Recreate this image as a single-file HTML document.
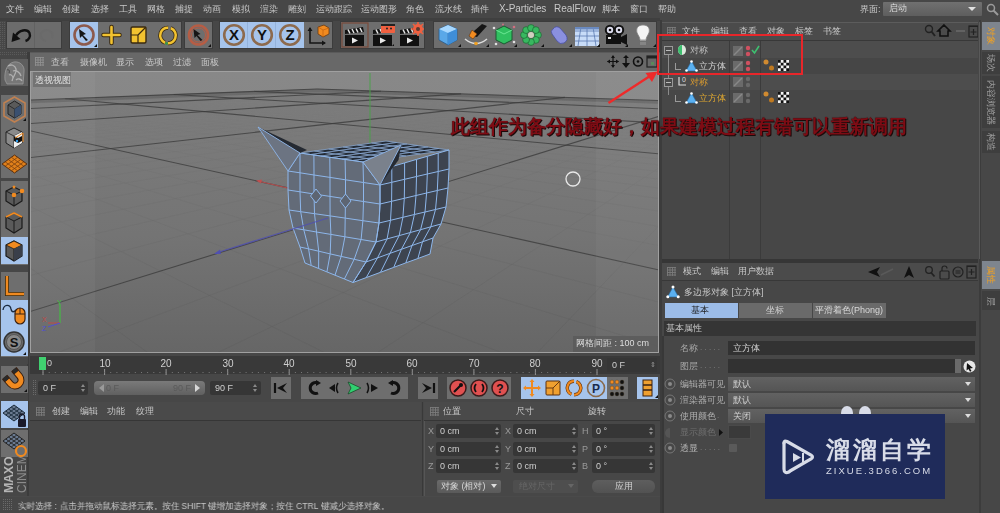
<!DOCTYPE html>
<html><head><meta charset="utf-8">
<style>
*{margin:0;padding:0;box-sizing:border-box}
html,body{width:1000px;height:513px;overflow:hidden;background:#474747;font-family:"Liberation Sans",sans-serif;color:#c4c4c4}
.a{position:absolute;display:block}
.t{position:absolute;white-space:nowrap;will-change:transform}
</style></head><body>
<div class="a" style="left:0px;top:0px;width:1000px;height:20px;background:#474747;"></div>
<div class="t" style="left:6px;top:4px;font-size:9px;line-height:11px;color:#c8c8c8;">文件</div>
<div class="t" style="left:34px;top:4px;font-size:9px;line-height:11px;color:#c8c8c8;">编辑</div>
<div class="t" style="left:62px;top:4px;font-size:9px;line-height:11px;color:#c8c8c8;">创建</div>
<div class="t" style="left:91px;top:4px;font-size:9px;line-height:11px;color:#c8c8c8;">选择</div>
<div class="t" style="left:119px;top:4px;font-size:9px;line-height:11px;color:#c8c8c8;">工具</div>
<div class="t" style="left:147px;top:4px;font-size:9px;line-height:11px;color:#c8c8c8;">网格</div>
<div class="t" style="left:175px;top:4px;font-size:9px;line-height:11px;color:#c8c8c8;">捕捉</div>
<div class="t" style="left:203px;top:4px;font-size:9px;line-height:11px;color:#c8c8c8;">动画</div>
<div class="t" style="left:232px;top:4px;font-size:9px;line-height:11px;color:#c8c8c8;">模拟</div>
<div class="t" style="left:260px;top:4px;font-size:9px;line-height:11px;color:#c8c8c8;">渲染</div>
<div class="t" style="left:288px;top:4px;font-size:9px;line-height:11px;color:#c8c8c8;">雕刻</div>
<div class="t" style="left:316px;top:4px;font-size:9px;line-height:11px;color:#c8c8c8;">运动跟踪</div>
<div class="t" style="left:361px;top:4px;font-size:9px;line-height:11px;color:#c8c8c8;">运动图形</div>
<div class="t" style="left:406px;top:4px;font-size:9px;line-height:11px;color:#c8c8c8;">角色</div>
<div class="t" style="left:435px;top:4px;font-size:9px;line-height:11px;color:#c8c8c8;">流水线</div>
<div class="t" style="left:471px;top:4px;font-size:9px;line-height:11px;color:#c8c8c8;">插件</div>
<div class="t" style="left:499px;top:3px;font-size:10px;line-height:12px;color:#c8c8c8;letter-spacing:-0.1px">X-Particles</div>
<div class="t" style="left:554px;top:3px;font-size:10px;line-height:12px;color:#c8c8c8;">RealFlow</div>
<div class="t" style="left:602px;top:4px;font-size:9px;line-height:11px;color:#c8c8c8;">脚本</div>
<div class="t" style="left:630px;top:4px;font-size:9px;line-height:11px;color:#c8c8c8;">窗口</div>
<div class="t" style="left:658px;top:4px;font-size:9px;line-height:11px;color:#c8c8c8;">帮助</div>
<div class="t" style="left:860px;top:4px;font-size:9px;line-height:11px;color:#c8c8c8;">界面:</div>
<div class="a" style="left:883px;top:2px;width:99px;height:14px;background:linear-gradient(#707070,#5e5e5e);border-radius:1px"></div>
<div class="t" style="left:889px;top:3px;font-size:9px;line-height:11px;color:#dcdcdc;">启动</div>
<svg class="a" style="left:968px;top:7px;" width="9" height="5" viewBox="0 0 9 5"><path d="M0 0H8L4 4Z" fill="#e0e0e0"/></svg>
<svg class="a" style="left:986px;top:3px;" width="14" height="14" viewBox="0 0 14 14"><circle cx="5" cy="5" r="3.5" fill="none" stroke="#9a9a9a" stroke-width="1.5"/><path d="M7.5 7.5L12 12" stroke="#9a9a9a" stroke-width="2"/></svg>
<div class="a" style="left:0px;top:20px;width:660px;height:32px;background:#474747;"></div>
<div class="a" style="left:0px;top:18px;width:660px;height:3px;background:#3f3f3f;"></div>
<svg class="a" style="left:0px;top:22px" width="5" height="28"><g fill="#5a5a5a"><rect x="0" y="0" width="1" height="1"/><rect x="0" y="2" width="1" height="1"/><rect x="0" y="4" width="1" height="1"/><rect x="0" y="6" width="1" height="1"/><rect x="0" y="8" width="1" height="1"/><rect x="0" y="10" width="1" height="1"/><rect x="0" y="12" width="1" height="1"/><rect x="0" y="14" width="1" height="1"/><rect x="0" y="16" width="1" height="1"/><rect x="0" y="18" width="1" height="1"/><rect x="0" y="20" width="1" height="1"/><rect x="0" y="22" width="1" height="1"/><rect x="0" y="24" width="1" height="1"/><rect x="0" y="26" width="1" height="1"/><rect x="2" y="0" width="1" height="1"/><rect x="2" y="2" width="1" height="1"/><rect x="2" y="4" width="1" height="1"/><rect x="2" y="6" width="1" height="1"/><rect x="2" y="8" width="1" height="1"/><rect x="2" y="10" width="1" height="1"/><rect x="2" y="12" width="1" height="1"/><rect x="2" y="14" width="1" height="1"/><rect x="2" y="16" width="1" height="1"/><rect x="2" y="18" width="1" height="1"/><rect x="2" y="20" width="1" height="1"/><rect x="2" y="22" width="1" height="1"/><rect x="2" y="24" width="1" height="1"/><rect x="2" y="26" width="1" height="1"/><rect x="4" y="0" width="1" height="1"/><rect x="4" y="2" width="1" height="1"/><rect x="4" y="4" width="1" height="1"/><rect x="4" y="6" width="1" height="1"/><rect x="4" y="8" width="1" height="1"/><rect x="4" y="10" width="1" height="1"/><rect x="4" y="12" width="1" height="1"/><rect x="4" y="14" width="1" height="1"/><rect x="4" y="16" width="1" height="1"/><rect x="4" y="18" width="1" height="1"/><rect x="4" y="20" width="1" height="1"/><rect x="4" y="22" width="1" height="1"/><rect x="4" y="24" width="1" height="1"/><rect x="4" y="26" width="1" height="1"/></g></svg>
<div class="a" style="left:6px;top:21px;width:56px;height:28px;background:#3c3c3c;"></div>
<div class="a" style="left:7px;top:22px;width:54px;height:26px;background:#6c6c6c;"></div>
<div class="a" style="left:34px;top:22px;width:1px;height:26px;background:#626262;"></div>
<svg class="a" style="left:7px;top:22px;" width="27" height="26" viewBox="0 0 27 26"><path d="M9 13.5C12 8 20 6.5 22.5 11C24 15 21.5 18 18.5 19" fill="none" stroke="#111" stroke-width="2.4"/><path d="M4.5 20L6 10.5L13.5 17Z" fill="#111"/></svg>
<svg class="a" style="left:34px;top:22px;" width="27" height="26" viewBox="0 0 27 26"><path d="M18 16 A6 5.5 0 1 0 12 19" fill="none" stroke="#6a6a6a" stroke-width="2"/></svg>
<div class="a" style="left:69px;top:21px;width:113px;height:28px;background:#3c3c3c;"></div>
<div class="a" style="left:70px;top:22px;width:111px;height:26px;background:#6e6e6e;"></div>
<div class="a" style="left:70px;top:22px;width:28px;height:26px;background:#a6c4ec;"></div>
<svg class="a" style="left:70px;top:22px;" width="28" height="26" viewBox="0 0 28 26"><circle cx="14" cy="13" r="9.5" fill="none" stroke="#8d5a4d" stroke-width="2.6"/><path d="M9 7 L16 12 L13 13 L18 18 L16 19 L12 14 L10 16Z" fill="#151515"/><path d="M24 25H27V22Z" fill="#111"/></svg>
<svg class="a" style="left:98px;top:22px;" width="27" height="26" viewBox="0 0 27 26"><path d="M13.5 5V21M5.5 13H21.5" stroke="#3a2a10" stroke-width="4.5" stroke-linecap="round"/><path d="M13.5 5V21M5.5 13H21.5" stroke="#f2c230" stroke-width="2.6" stroke-linecap="round"/></svg>
<svg class="a" style="left:125px;top:22px;" width="27" height="26" viewBox="0 0 27 26"><rect x="6" y="5" width="15" height="16" rx="1.5" fill="#f2c230" stroke="#3a2a10" stroke-width="1.4"/><path d="M13 21V13H6M13 13L21 5" stroke="#3a2a10" stroke-width="1.2" fill="none"/></svg>
<svg class="a" style="left:152px;top:22px;" width="28" height="26" viewBox="0 0 28 26"><g transform="rotate(-69 16 13.5)"><circle cx="16" cy="13.5" r="7.8" fill="none" stroke="#3a2a10" stroke-width="4" stroke-dasharray="21.5 3"/><circle cx="16" cy="13.5" r="7.8" fill="none" stroke="#f2c230" stroke-width="2.5" stroke-dasharray="21.5 3"/></g><circle cx="14.5" cy="21.5" r="1.4" fill="#3a9a40"/></svg>
<div class="a" style="left:184px;top:21px;width:29px;height:28px;background:#3c3c3c;"></div>
<div class="a" style="left:185px;top:22px;width:27px;height:26px;background:#6e6e6e;"></div>
<svg class="a" style="left:185px;top:22px;" width="27" height="26" viewBox="0 0 27 26"><circle cx="13.5" cy="13" r="9.5" fill="none" stroke="#b55d45" stroke-width="2.6"/><circle cx="13.5" cy="13" r="7" fill="none" stroke="#b55d45" stroke-width="1"/><path d="M8.5 7 L15.5 12 L12.5 13 L17.5 18 L15.5 19 L11.5 14 L9.5 16Z" fill="#151515"/><path d="M23 25H26V22Z" fill="#111"/></svg>
<div class="a" style="left:219px;top:21px;width:114px;height:28px;background:#3c3c3c;"></div>
<div class="a" style="left:220px;top:22px;width:84px;height:26px;background:#a6c4ec;"></div>
<svg class="a" style="left:220px;top:22px;" width="28" height="26" viewBox="0 0 28 26"><circle cx="14" cy="13" r="9.8" fill="none" stroke="#8d6a4d" stroke-width="2.6"/><text x="14" y="18" font-family="Liberation Sans" font-weight="bold" font-size="15" text-anchor="middle" fill="#111">X</text></svg>
<svg class="a" style="left:248px;top:22px;" width="28" height="26" viewBox="0 0 28 26"><circle cx="14" cy="13" r="9.8" fill="none" stroke="#8d6a4d" stroke-width="2.6"/><text x="14" y="18" font-family="Liberation Sans" font-weight="bold" font-size="15" text-anchor="middle" fill="#111">Y</text></svg>
<svg class="a" style="left:276px;top:22px;" width="28" height="26" viewBox="0 0 28 26"><circle cx="14" cy="13" r="9.8" fill="none" stroke="#8d6a4d" stroke-width="2.6"/><text x="14" y="18" font-family="Liberation Sans" font-weight="bold" font-size="15" text-anchor="middle" fill="#111">Z</text></svg>
<div class="a" style="left:247px;top:22px;width:1px;height:26px;background:#94b2da;"></div>
<div class="a" style="left:275px;top:22px;width:1px;height:26px;background:#94b2da;"></div>
<div class="a" style="left:304px;top:22px;width:28px;height:26px;background:#6e6e6e;"></div>
<svg class="a" style="left:304px;top:22px;" width="28" height="26" viewBox="0 0 28 26"><path d="M6 6V21H21" fill="none" stroke="#151515" stroke-width="1.6"/><path d="M3.5 9L6 5L8.5 9Z M18 18.5L22 21L18 23.5Z" fill="#151515"/><path d="M14 5L20 3L25 6V12L19 15L14 12Z" fill="#f08a20" stroke="#6a3a10" stroke-width="0.8"/><path d="M14 5L19 8L25 6M19 8V15" fill="none" stroke="#c06010" stroke-width="0.7"/></svg>
<div class="a" style="left:340px;top:21px;width:85px;height:28px;background:#3c3c3c;"></div>
<div class="a" style="left:341px;top:22px;width:83px;height:26px;background:#6e6e6e;"></div>
<svg class="a" style="left:341px;top:22px;" width="83" height="26" viewBox="0 0 83 26"><rect x="1" y="1" width="26" height="24" fill="none" stroke="#7a4a3a" stroke-width="1.2"/><rect x="4" y="13" width="19" height="11" fill="#111"/><path d="M4 8 L22 5 L23 10 L4 12Z" fill="#111"/><path d="M7 7.5l2 4M11 7l2 4M15 6.5l2 4M19 6l2 4" stroke="#e8e8e8" stroke-width="1.5"/><path d="M11 15.5L17 18.5L11 21.5Z" fill="#e8e8e8"/><rect x="32" y="13" width="19" height="11" fill="#111"/><path d="M32 8 L50 5 L51 10 L32 12Z" fill="#111"/><path d="M35 7.5l2 4M39 7l2 4M43 6.5l2 4M47 6l2 4" stroke="#e8e8e8" stroke-width="1.5"/><path d="M39 15.5L45 18.5L39 21.5Z" fill="#e8e8e8"/><rect x="40" y="2" width="14" height="9" rx="1" fill="#f06040"/><rect x="40" y="2" width="14" height="2" fill="#222"/><circle cx="46" cy="6.5" r="1" fill="#222"/><circle cx="50" cy="6.5" r="1" fill="#222"/><rect x="59" y="13" width="19" height="11" fill="#111"/><path d="M59 8 L77 5 L78 10 L59 12Z" fill="#111"/><path d="M62 7.5l2 4M66 7l2 4M70 6.5l2 4M74 6l2 4" stroke="#e8e8e8" stroke-width="1.5"/><path d="M66 15.5L72 18.5L66 21.5Z" fill="#e8e8e8"/><circle cx="77" cy="7" r="5" fill="#f06040"/><circle cx="77" cy="7" r="2" fill="#5a3a30"/><path d="M77 0v3M77 11v3M70 7h3M81 7h3M72 2l2 2M80 10l2 2M72 12l2-2M80 4l2-2" stroke="#f06040" stroke-width="1.6"/><path d="M51 24h2v-2Z" fill="#111"/></svg>
<div class="a" style="left:433px;top:21px;width:224px;height:28px;background:#3c3c3c;"></div>
<div class="a" style="left:434px;top:22px;width:222px;height:26px;background:#6e6e6e;"></div>
<svg class="a" style="left:434.0px;top:22px;" width="28" height="26" viewBox="0 0 28 26"><path d="M14 3L23 7V18L14 23L5 18V7Z" fill="#5aa8e8" stroke="#2a5a8a" stroke-width="0.8"/><path d="M5 7L14 11L23 7L14 3Z" fill="#a8d8ff"/><path d="M14 11V23" stroke="#3a78b8" stroke-width="0.8"/><path d="M14 11L23 7V18L14 23Z" fill="#3f8ed8"/></svg>
<svg class="a" style="left:461.8px;top:22px;" width="28" height="26" viewBox="0 0 28 26"><path d="M3 17Q14 26 25 17" fill="none" stroke="#dcdcdc" stroke-width="1.6"/><circle cx="14" cy="21.5" r="1.8" fill="#f0a020"/><path d="M20 2L25 4L15 15L10 14L12 9Z" fill="#151515"/><path d="M10 8L15 12L11 17L7 14Z" fill="#f08a20" stroke="#5a3010" stroke-width="0.6"/></svg>
<svg class="a" style="left:489.6px;top:22px;" width="28" height="26" viewBox="0 0 28 26"><path d="M14 4L22 8V18L14 22L6 18V8Z" fill="#30c060" stroke="#1a5a30" stroke-width="1"/><path d="M6 8L14 12L22 8" fill="none" stroke="#7af0a0" stroke-width="0.8"/><circle cx="4" cy="6" r="1.3" fill="#e0e0e0"/><circle cx="24" cy="5" r="1.3" fill="#d07080"/><circle cx="6" cy="22" r="1.3" fill="#e0e0e0"/><circle cx="24" cy="20" r="1.3" fill="#e0e0e0"/><circle cx="13" cy="2.5" r="1" fill="#d07080"/></svg>
<svg class="a" style="left:517.4px;top:22px;" width="28" height="26" viewBox="0 0 28 26"><circle cx="21.0" cy="13.0" r="3.4" fill="#38b860" stroke="#1a5a2a" stroke-width="0.6"/><circle cx="18.9" cy="17.9" r="3.4" fill="#38b860" stroke="#1a5a2a" stroke-width="0.6"/><circle cx="14.0" cy="20.0" r="3.4" fill="#38b860" stroke="#1a5a2a" stroke-width="0.6"/><circle cx="9.1" cy="17.9" r="3.4" fill="#38b860" stroke="#1a5a2a" stroke-width="0.6"/><circle cx="7.0" cy="13.0" r="3.4" fill="#38b860" stroke="#1a5a2a" stroke-width="0.6"/><circle cx="9.1" cy="8.1" r="3.4" fill="#38b860" stroke="#1a5a2a" stroke-width="0.6"/><circle cx="14.0" cy="6.0" r="3.4" fill="#38b860" stroke="#1a5a2a" stroke-width="0.6"/><circle cx="18.9" cy="8.1" r="3.4" fill="#38b860" stroke="#1a5a2a" stroke-width="0.6"/><circle cx="14" cy="13" r="3" fill="#d0d0c0"/></svg>
<svg class="a" style="left:545.2px;top:22px;" width="28" height="26" viewBox="0 0 28 26"><path d="M8 7Q11 3 15 6L21 13Q24 18 19 21Q15 23 12 19L7 12Q5 9 8 7Z" fill="#8a90e0" stroke="#4a50a0" stroke-width="0.8"/></svg>
<svg class="a" style="left:573.0px;top:22px;" width="28" height="26" viewBox="0 0 28 26"><rect x="2" y="5" width="24" height="19" fill="#c8dcf8"/><path d="M2 9H26M2 14H26M2 19H26M8 5L5 24M14 5V24M20 5L23 24" stroke="#5a7ab0" stroke-width="0.8"/><rect x="2" y="5" width="24" height="2.5" fill="#6a8ac0"/><path d="M24 25h3v-3Z" fill="#111"/></svg>
<svg class="a" style="left:600.8px;top:22px;" width="28" height="26" viewBox="0 0 28 26"><circle cx="9" cy="8" r="4.2" fill="#dde" stroke="#111" stroke-width="2"/><circle cx="18" cy="8" r="4.2" fill="#dde" stroke="#111" stroke-width="2"/><circle cx="9" cy="8" r="1.3" fill="#111"/><circle cx="18" cy="8" r="1.3" fill="#111"/><rect x="5" y="13" width="15" height="9" fill="#111"/><path d="M20 15L26 12V23L20 20Z" fill="#111"/><rect x="7" y="15" width="3" height="2" fill="#e8e8e8"/></svg>
<svg class="a" style="left:628.6px;top:22px;" width="28" height="26" viewBox="0 0 28 26"><path d="M14 3C8.5 3 7 7 8 10.5C9 13.5 11 15 11 18H17C17 15 19 13.5 20 10.5C21 7 19.5 3 14 3Z" fill="#f4f4f4" stroke="#888" stroke-width="0.8"/><rect x="11" y="18" width="6" height="4.5" fill="#9a9a9a"/><path d="M11 19.5h6M11 21h6" stroke="#555" stroke-width="0.6"/></svg>
<svg class="a" style="left:457.0px;top:43px;" width="5" height="5" viewBox="0 0 5 5"><path d="M1 4H4V1Z" fill="#111"/></svg>
<svg class="a" style="left:484.8px;top:43px;" width="5" height="5" viewBox="0 0 5 5"><path d="M1 4H4V1Z" fill="#111"/></svg>
<svg class="a" style="left:512.6px;top:43px;" width="5" height="5" viewBox="0 0 5 5"><path d="M1 4H4V1Z" fill="#111"/></svg>
<svg class="a" style="left:540.4px;top:43px;" width="5" height="5" viewBox="0 0 5 5"><path d="M1 4H4V1Z" fill="#111"/></svg>
<svg class="a" style="left:568.2px;top:43px;" width="5" height="5" viewBox="0 0 5 5"><path d="M1 4H4V1Z" fill="#111"/></svg>
<svg class="a" style="left:596.0px;top:43px;" width="5" height="5" viewBox="0 0 5 5"><path d="M1 4H4V1Z" fill="#111"/></svg>
<svg class="a" style="left:623.8px;top:43px;" width="5" height="5" viewBox="0 0 5 5"><path d="M1 4H4V1Z" fill="#111"/></svg>
<svg class="a" style="left:651.6px;top:43px;" width="5" height="5" viewBox="0 0 5 5"><path d="M1 4H4V1Z" fill="#111"/></svg>
<div class="a" style="left:0px;top:52px;width:29px;height:442px;background:#474747;"></div>
<div class="a" style="left:27px;top:52px;width:3px;height:444px;background:#3c3c3c;"></div>
<svg class="a" style="left:0px;top:52px" width="28" height="4"><g fill="#5a5a5a"><rect x="0" y="0" width="1" height="1"/><rect x="0" y="2" width="1" height="1"/><rect x="2" y="0" width="1" height="1"/><rect x="2" y="2" width="1" height="1"/><rect x="4" y="0" width="1" height="1"/><rect x="4" y="2" width="1" height="1"/><rect x="6" y="0" width="1" height="1"/><rect x="6" y="2" width="1" height="1"/><rect x="8" y="0" width="1" height="1"/><rect x="8" y="2" width="1" height="1"/><rect x="10" y="0" width="1" height="1"/><rect x="10" y="2" width="1" height="1"/><rect x="12" y="0" width="1" height="1"/><rect x="12" y="2" width="1" height="1"/><rect x="14" y="0" width="1" height="1"/><rect x="14" y="2" width="1" height="1"/><rect x="16" y="0" width="1" height="1"/><rect x="16" y="2" width="1" height="1"/><rect x="18" y="0" width="1" height="1"/><rect x="18" y="2" width="1" height="1"/><rect x="20" y="0" width="1" height="1"/><rect x="20" y="2" width="1" height="1"/><rect x="22" y="0" width="1" height="1"/><rect x="22" y="2" width="1" height="1"/><rect x="24" y="0" width="1" height="1"/><rect x="24" y="2" width="1" height="1"/><rect x="26" y="0" width="1" height="1"/><rect x="26" y="2" width="1" height="1"/></g></svg>
<div class="a" style="left:1px;top:59px;width:27px;height:27px;background:#5e5e5e;"></div>
<svg class="a" style="left:1px;top:58px;" width="27" height="29" viewBox="0 0 27 29"><path d="M4 22C3 12 7 5 13 4C19 3 24 8 23 14L22 26H6Z" fill="#777" stroke="#9a9a9a" stroke-width="0.8"/><path d="M7 8C10 6 14 7 15 11C16 15 12 18 11 23M12 13C15 12 19 14 20 18M8 17C10 16 12 18 12 20M15 22C17 20 20 21 21 23" fill="none" stroke="#b0b0b0" stroke-width="1.3"/><path d="M6 12C8 11 9 13 8 15" fill="none" stroke="#444" stroke-width="1"/></svg>
<div class="a" style="left:1px;top:86px;width:27px;height:9px;background:#474747;"></div>
<div class="a" style="left:1px;top:95px;width:27px;height:83px;background:#6e6e6e;"></div>
<svg class="a" style="left:1px;top:95px;" width="27" height="30" viewBox="0 0 27 30"><path d="M13.5 2L24 8V21L13.5 27L3 21V8Z" fill="none" stroke="#c08050" stroke-width="1.6"/><path d="M13.5 6L20 10V19L13.5 23L7 19V10Z" fill="#5a5a5a" stroke="#222" stroke-width="1"/><path d="M7 10L13.5 14L20 10M13.5 14V23" fill="none" stroke="#222" stroke-width="0.8"/><path d="M13.5 14L20 10V19L13.5 23Z" fill="#3a5070"/><path d="M22 26h3v-3Z" fill="#111"/></svg>
<svg class="a" style="left:1px;top:124px;" width="27" height="28" viewBox="0 0 27 28"><path d="M13 4L21 8V19L13 24L5 19V8Z" fill="#8a8a8a" stroke="#222" stroke-width="1"/><path d="M5 8L13 12L21 8M13 12V24" fill="none" stroke="#222" stroke-width="0.8"/><path d="M13 12L21 8V19L13 24Z" fill="#f0f0f0"/><path d="M13 12l4 2v5l-4 -2Z M17 19l4-2v-5l-4 2Z" fill="#111"/><path d="M14 14L22 9V18" fill="none" stroke="#f08a20" stroke-width="1"/><circle cx="16" cy="17" r="1.2" fill="#30a0f0"/></svg>
<svg class="a" style="left:1px;top:151px;" width="27" height="26" viewBox="0 0 27 26"><path d="M13.5 4L26 13L13.5 22L1 13Z" fill="#e0801a" stroke="#5a3010" stroke-width="1"/><path d="M4.1 10.75L16.6 19.75M7.25 8.5L19.75 17.5M10.4 6.25L22.9 15.25M22.9 10.75L10.4 19.75M19.75 8.5L7.25 17.5M16.6 6.25L4.1 15.25" stroke="#7a4010" stroke-width="0.8"/></svg>
<div class="a" style="left:1px;top:178px;width:27px;height:3px;background:#474747;"></div>
<div class="a" style="left:1px;top:181px;width:27px;height:84px;background:#6e6e6e;"></div>
<svg class="a" style="left:1px;top:182px;" width="27" height="27" viewBox="0 0 27 27"><path d="M13 5L21 9V19L13 24L5 19V9Z" fill="#5a5a5a" stroke="#1a1a1a" stroke-width="1.2"/><path d="M5 9L13 13L21 9M13 13V24" fill="none" stroke="#1a1a1a" stroke-width="1"/><circle cx="13" cy="13" r="2.3" fill="#f08a20"/><circle cx="21" cy="9" r="2.3" fill="#f08a20"/><circle cx="13" cy="5" r="1.5" fill="#f08a20"/></svg>
<svg class="a" style="left:1px;top:209px;" width="27" height="27" viewBox="0 0 27 27"><path d="M13 4L21 8V19L13 24L5 19V8Z" fill="#5a5a5a" stroke="#1a1a1a" stroke-width="1.2"/><path d="M5 8L13 12L21 8M13 12V24" fill="none" stroke="#1a1a1a" stroke-width="1"/><path d="M5 8L13 4L21 8" fill="none" stroke="#f08a20" stroke-width="1.8"/></svg>
<div class="a" style="left:1px;top:237px;width:27px;height:27px;background:#a6c4ec;"></div>
<svg class="a" style="left:1px;top:237px;" width="27" height="27" viewBox="0 0 27 27"><path d="M13 4L21 8V19L13 24L5 19V8Z" fill="#5a5a5a" stroke="#1a1a1a" stroke-width="1.2"/><path d="M5 8L13 12L21 8L13 4Z" fill="#f08a20" stroke="#1a1a1a" stroke-width="0.8"/><path d="M13 12V24" stroke="#1a1a1a" stroke-width="1"/><path d="M13 12L21 8V19L13 24Z" fill="#3a3f4a"/></svg>
<div class="a" style="left:1px;top:265px;width:27px;height:7px;background:#474747;"></div>
<div class="a" style="left:1px;top:272px;width:27px;height:85px;background:#6e6e6e;"></div>
<svg class="a" style="left:1px;top:272px;" width="27" height="27" viewBox="0 0 27 27"><path d="M6 4V22H23" fill="none" stroke="#3a2a10" stroke-width="4"/><path d="M6 4V22H23" fill="none" stroke="#f08a20" stroke-width="2.4"/></svg>
<div class="a" style="left:1px;top:300px;width:27px;height:28px;background:#a6c4ec;"></div>
<svg class="a" style="left:1px;top:300px;" width="27" height="28" viewBox="0 0 27 28"><path d="M2 10C3 4 9 4 10 9C11 13 13 12 15 10" fill="none" stroke="#1a2a40" stroke-width="1.3"/><rect x="14" y="8" width="10" height="16" rx="5" fill="#f08a20" stroke="#3a2010" stroke-width="1.2"/><path d="M14 14H24M19 8V14" stroke="#3a2010" stroke-width="1"/></svg>
<div class="a" style="left:1px;top:328px;width:27px;height:28px;background:#a6c4ec;"></div>
<svg class="a" style="left:1px;top:328px;" width="27" height="28" viewBox="0 0 27 28"><circle cx="13" cy="14" r="10" fill="#6a6a6a" stroke="#333" stroke-width="1.5"/><circle cx="13" cy="14" r="7.5" fill="#888" stroke="#555" stroke-width="1"/><text x="13" y="19" font-family="Liberation Sans" font-weight="bold" font-size="13" text-anchor="middle" fill="#111">S</text><path d="M22 27h3v-3Z" fill="#111"/></svg>
<div class="a" style="left:1px;top:357px;width:27px;height:7px;background:#474747;"></div>
<div class="a" style="left:1px;top:366px;width:27px;height:27px;background:#6e6e6e;"></div>
<svg class="a" style="left:1px;top:366px;" width="27" height="27" viewBox="0 0 27 27"><g transform="rotate(-40 14 14)"><path d="M8 5V14A6 6 0 0 0 20 14V5" fill="none" stroke="#3a2010" stroke-width="7"/><path d="M8 9V14A6 6 0 0 0 20 14V9" fill="none" stroke="#f08a20" stroke-width="5"/><path d="M8 5V9M20 5V9" stroke="#2a2a2a" stroke-width="5"/></g><path d="M23 26h3v-3Z" fill="#111"/></svg>
<div class="a" style="left:1px;top:393px;width:27px;height:8px;background:#474747;"></div>
<div class="a" style="left:1px;top:401px;width:27px;height:27px;background:#a6c4ec;"></div>
<svg class="a" style="left:1px;top:402px;" width="27" height="27" viewBox="0 0 27 27"><path d="M13 3L24 11L13 19L2 11Z" fill="#6a7a90" stroke="#1a2a3a" stroke-width="1"/><path d="M10.2 5.0L21.2 13.0" stroke="#1a2a3a" stroke-width="0.9"/><path d="M15.8 5.0L4.8 13.0" stroke="#1a2a3a" stroke-width="0.9"/><path d="M7.5 7.0L18.5 15.0" stroke="#1a2a3a" stroke-width="0.9"/><path d="M18.5 7.0L7.5 15.0" stroke="#1a2a3a" stroke-width="0.9"/><path d="M4.8 9.0L15.8 17.0" stroke="#1a2a3a" stroke-width="0.9"/><path d="M21.2 9.0L10.2 17.0" stroke="#1a2a3a" stroke-width="0.9"/><rect x="17" y="17" width="8" height="8" rx="1" fill="#1a1a2a"/><path d="M18.5 17V14.5A2.5 2.5 0 0 1 23.5 14.5V17" fill="none" stroke="#1a1a2a" stroke-width="1.4"/></svg>
<div class="a" style="left:1px;top:430px;width:27px;height:27px;background:#6e6e6e;"></div>
<svg class="a" style="left:1px;top:430px;" width="27" height="27" viewBox="0 0 27 27"><path d="M13 3L24 11L13 19L2 11Z" fill="#6a7a90" stroke="#222" stroke-width="1"/><path d="M10.2 5.0L21.2 13.0" stroke="#222" stroke-width="0.9"/><path d="M15.8 5.0L4.8 13.0" stroke="#222" stroke-width="0.9"/><path d="M7.5 7.0L18.5 15.0" stroke="#222" stroke-width="0.9"/><path d="M18.5 7.0L7.5 15.0" stroke="#222" stroke-width="0.9"/><path d="M4.8 9.0L15.8 17.0" stroke="#222" stroke-width="0.9"/><path d="M21.2 9.0L10.2 17.0" stroke="#222" stroke-width="0.9"/><circle cx="20" cy="21" r="5" fill="none" stroke="#f08a20" stroke-width="2.2"/></svg>
<div class="a" style="left:1px;top:457px;width:27px;height:37px;overflow:hidden"><div class="t" style="left:-22px;top:0px;width:60px;transform:rotate(-90deg);font-size:12.5px;line-height:12px;font-weight:bold;color:#b4b4b4;letter-spacing:-0.3px;text-align:left">MAXON</div><div class="t" style="left:-9px;top:0px;width:60px;transform:rotate(-90deg);font-size:12px;line-height:12px;color:#8c8c8c;letter-spacing:0px;text-align:left">CINEMA</div></div>
<div class="a" style="left:29px;top:52px;width:633px;height:302px;background:#3c3c3c;"></div>
<div class="a" style="left:30px;top:52px;width:630px;height:19px;background:#686868;"></div>
<div class="a" style="left:30px;top:52px;width:630px;height:1px;background:#5a5a5a;"></div>
<svg class="a" style="left:35px;top:57px" width="9" height="9"><g stroke="#909090" stroke-width="0.9" fill="none"><path d="M0 0.5H9M0.5 0V9"/><path d="M0 3.0H9M3.0 0V9"/><path d="M0 5.5H9M5.5 0V9"/><path d="M0 8.0H9M8.0 0V9"/></g></svg>
<div class="t" style="left:51px;top:57px;font-size:9px;line-height:11px;color:#c8c8c8;">查看</div>
<div class="t" style="left:80px;top:57px;font-size:9px;line-height:11px;color:#c8c8c8;">摄像机</div>
<div class="t" style="left:116px;top:57px;font-size:9px;line-height:11px;color:#c8c8c8;">显示</div>
<div class="t" style="left:145px;top:57px;font-size:9px;line-height:11px;color:#c8c8c8;">选项</div>
<div class="t" style="left:173px;top:57px;font-size:9px;line-height:11px;color:#c8c8c8;">过滤</div>
<div class="t" style="left:201px;top:57px;font-size:9px;line-height:11px;color:#c8c8c8;">面板</div>
<svg class="a" style="left:605px;top:53px;" width="54" height="17" viewBox="0 0 54 17"><path d="M8 3V14M2.5 8.5H13.5" stroke="#111" stroke-width="1.2"/><path d="M8 2L10 5H6Z M8 15L10 12H6Z M2 8.5L5 6.5V10.5Z M14 8.5L11 6.5V10.5Z" fill="#111"/><path d="M21 3V13" stroke="#111" stroke-width="1.5"/><path d="M17 10L21 15L25 10Z M18 5L21 2L24 5Z" fill="#111"/><circle cx="33" cy="8.5" r="4.5" fill="none" stroke="#111" stroke-width="1.6"/><circle cx="33" cy="8.5" r="1.3" fill="#111"/><rect x="42" y="3" width="10" height="11" fill="none" stroke="#222" stroke-width="1.2"/><rect x="42" y="3" width="10" height="2.5" fill="#222"/><rect x="46" y="9" width="3" height="3" fill="#5a8a5a"/></svg>
<svg class="a" style="left:31px;top:72px;" width="627" height="281" viewBox="0 0 627 281"><defs><linearGradient id="bg" x1="0" y1="0" x2="0" y2="1"><stop offset="0" stop-color="#888"/><stop offset="1" stop-color="#808080"/></linearGradient><linearGradient id="fl" x1="0" y1="0" x2="0" y2="1"><stop offset="0" stop-color="#7d7d7d"/><stop offset="0.45" stop-color="#747474"/><stop offset="1" stop-color="#5f5f5f"/></linearGradient><linearGradient id="mg" x1="0" y1="0" x2="0" y2="282" gradientUnits="userSpaceOnUse"><stop offset="0.08" stop-color="#000"/><stop offset="0.3" stop-color="#555"/><stop offset="1" stop-color="#fff"/></linearGradient><clipPath id="vc"><rect x="0" y="0" width="627" height="281"/></clipPath></defs><g clip-path="url(#vc)"><rect x="0" y="0" width="627" height="281" fill="url(#bg)"/><path d="M-60.0 30.4L286.0 17.0L687.0 30.6L687 341L-60 341Z" fill="url(#fl)"/><path d="M-60.0 30.4L286.0 17.0L687.0 30.6" fill="none" stroke="#4a4a4a" stroke-width="3.5" stroke-opacity="0.35" transform="translate(0,1.5)"/><mask id="mm"><rect x="0" y="0" width="2000" height="2000" fill="url(#mg)"/></mask><g mask="url(#mm)"><path d="M-45379.5 2264.7L-3795.1 174.9" stroke="#454545" stroke-width="0.8" stroke-opacity="0.16"/><path d="M43486.5 2264.7L2627.1 96.2" stroke="#454545" stroke-width="0.8" stroke-opacity="0.16"/><path d="M-43960.4 2264.7L-3359.9 158.0" stroke="#454545" stroke-width="0.8" stroke-opacity="0.16"/><path d="M42204.2 2264.7L2481.6 91.3" stroke="#454545" stroke-width="0.8" stroke-opacity="0.16"/><path d="M-42541.3 2264.7L-3000.3 144.1" stroke="#454545" stroke-width="0.8" stroke-opacity="0.16"/><path d="M40921.9 2264.7L2350.0 86.8" stroke="#454545" stroke-width="0.8" stroke-opacity="0.16"/><path d="M-41122.2 2264.7L-2698.2 132.4" stroke="#454545" stroke-width="0.8" stroke-opacity="0.16"/><path d="M39639.6 2264.7L2230.4 82.8" stroke="#454545" stroke-width="0.8" stroke-opacity="0.16"/><path d="M-39703.1 2264.7L-2440.9 122.5" stroke="#454545" stroke-width="0.8" stroke-opacity="0.16"/><path d="M38357.4 2264.7L2121.2 79.1" stroke="#454545" stroke-width="0.8" stroke-opacity="0.16"/><path d="M-38283.9 2264.7L-2219.0 113.9" stroke="#454545" stroke-width="0.8" stroke-opacity="0.16"/><path d="M37075.1 2264.7L2021.1 75.7" stroke="#454545" stroke-width="0.8" stroke-opacity="0.16"/><path d="M-36864.8 2264.7L-2025.8 106.4" stroke="#454545" stroke-width="0.8" stroke-opacity="0.16"/><path d="M35792.8 2264.7L1929.0 72.6" stroke="#454545" stroke-width="0.8" stroke-opacity="0.16"/><path d="M-35445.7 2264.7L-1855.9 99.9" stroke="#454545" stroke-width="0.8" stroke-opacity="0.16"/><path d="M34510.5 2264.7L1844.1 69.7" stroke="#454545" stroke-width="0.8" stroke-opacity="0.16"/><path d="M-34026.6 2264.7L-1705.5 94.0" stroke="#454545" stroke-width="0.8" stroke-opacity="0.16"/><path d="M33228.2 2264.7L1765.4 67.0" stroke="#454545" stroke-width="0.8" stroke-opacity="0.16"/><path d="M-31188.3 2264.7L-1451.0 84.2" stroke="#454545" stroke-width="0.8" stroke-opacity="0.16"/><path d="M30663.6 2264.7L1624.4 62.3" stroke="#454545" stroke-width="0.8" stroke-opacity="0.16"/><path d="M-29769.2 2264.7L-1342.3 80.0" stroke="#454545" stroke-width="0.8" stroke-opacity="0.16"/><path d="M29381.3 2264.7L1561.0 60.1" stroke="#454545" stroke-width="0.8" stroke-opacity="0.16"/><path d="M-28350.1 2264.7L-1243.8 76.2" stroke="#454545" stroke-width="0.8" stroke-opacity="0.16"/><path d="M28099.0 2264.7L1501.6 58.1" stroke="#454545" stroke-width="0.8" stroke-opacity="0.16"/><path d="M-26931.0 2264.7L-1154.0 72.7" stroke="#454545" stroke-width="0.8" stroke-opacity="0.16"/><path d="M26816.7 2264.7L1446.0 56.2" stroke="#454545" stroke-width="0.8" stroke-opacity="0.16"/><path d="M-25511.9 2264.7L-1071.8 69.5" stroke="#454545" stroke-width="0.8" stroke-opacity="0.16"/><path d="M25534.4 2264.7L1393.8 54.5" stroke="#454545" stroke-width="0.8" stroke-opacity="0.16"/><path d="M-24092.7 2264.7L-996.4 66.6" stroke="#454545" stroke-width="0.8" stroke-opacity="0.16"/><path d="M24252.1 2264.7L1344.6 52.8" stroke="#454545" stroke-width="0.8" stroke-opacity="0.16"/><path d="M-22673.6 2264.7L-926.8 63.9" stroke="#454545" stroke-width="0.8" stroke-opacity="0.16"/><path d="M22969.8 2264.7L1298.2 51.2" stroke="#454545" stroke-width="0.8" stroke-opacity="0.16"/><path d="M-21254.5 2264.7L-862.5 61.4" stroke="#454545" stroke-width="0.8" stroke-opacity="0.16"/><path d="M21687.5 2264.7L1254.4 49.8" stroke="#454545" stroke-width="0.8" stroke-opacity="0.16"/><path d="M-19835.4 2264.7L-802.9 59.1" stroke="#454545" stroke-width="0.8" stroke-opacity="0.16"/><path d="M20405.2 2264.7L1213.0 48.4" stroke="#454545" stroke-width="0.8" stroke-opacity="0.16"/><path d="M-16997.1 2264.7L-695.8 55.0" stroke="#454545" stroke-width="0.8" stroke-opacity="0.16"/><path d="M17840.6 2264.7L1136.6 45.8" stroke="#454545" stroke-width="0.8" stroke-opacity="0.16"/><path d="M-15578.0 2264.7L-647.6 53.1" stroke="#454545" stroke-width="0.8" stroke-opacity="0.16"/><path d="M16558.3 2264.7L1101.3 44.6" stroke="#454545" stroke-width="0.8" stroke-opacity="0.16"/><path d="M-14158.9 2264.7L-602.3 51.4" stroke="#454545" stroke-width="0.8" stroke-opacity="0.16"/><path d="M15276.0 2264.7L1067.6 43.4" stroke="#454545" stroke-width="0.8" stroke-opacity="0.16"/><path d="M-12739.8 2264.7L-559.9 49.7" stroke="#454545" stroke-width="0.8" stroke-opacity="0.16"/><path d="M13993.7 2264.7L1035.6 42.4" stroke="#454545" stroke-width="0.8" stroke-opacity="0.16"/><path d="M-11320.6 2264.7L-520.0 48.2" stroke="#454545" stroke-width="0.8" stroke-opacity="0.16"/><path d="M12711.4 2264.7L1005.1 41.3" stroke="#454545" stroke-width="0.8" stroke-opacity="0.16"/><path d="M-9901.5 2264.7L-482.4 46.7" stroke="#454545" stroke-width="0.8" stroke-opacity="0.16"/><path d="M11429.1 2264.7L975.9 40.3" stroke="#454545" stroke-width="0.8" stroke-opacity="0.16"/><path d="M-8482.4 2264.7L-446.9 45.3" stroke="#454545" stroke-width="0.8" stroke-opacity="0.16"/><path d="M10146.8 2264.7L948.1 39.4" stroke="#454545" stroke-width="0.8" stroke-opacity="0.16"/><path d="M-7063.3 2264.7L-413.4 44.1" stroke="#454545" stroke-width="0.8" stroke-opacity="0.16"/><path d="M8864.6 2264.7L921.5 38.5" stroke="#454545" stroke-width="0.8" stroke-opacity="0.16"/><path d="M-5644.2 2264.7L-381.7 42.8" stroke="#454545" stroke-width="0.8" stroke-opacity="0.16"/><path d="M7582.3 2264.7L896.0 37.6" stroke="#454545" stroke-width="0.8" stroke-opacity="0.16"/><path d="M-2805.9 2264.7L-323.0 40.6" stroke="#454545" stroke-width="0.8" stroke-opacity="0.16"/><path d="M5017.7 2264.7L848.1 36.0" stroke="#454545" stroke-width="0.8" stroke-opacity="0.16"/><path d="M-1386.8 2264.7L-295.8 39.5" stroke="#454545" stroke-width="0.8" stroke-opacity="0.16"/><path d="M3735.4 2264.7L825.6 35.2" stroke="#454545" stroke-width="0.8" stroke-opacity="0.16"/><path d="M32.3 2264.7L-270.0 38.5" stroke="#454545" stroke-width="0.8" stroke-opacity="0.16"/><path d="M2453.1 2264.7L804.0 34.5" stroke="#454545" stroke-width="0.8" stroke-opacity="0.16"/><path d="M1451.4 2264.7L-245.4 37.6" stroke="#454545" stroke-width="0.8" stroke-opacity="0.16"/><path d="M1170.8 2264.7L783.2 33.8" stroke="#454545" stroke-width="0.8" stroke-opacity="0.16"/><path d="M2870.6 2264.7L-221.9 36.6" stroke="#454545" stroke-width="0.8" stroke-opacity="0.16"/><path d="M-111.5 2264.7L763.2 33.1" stroke="#454545" stroke-width="0.8" stroke-opacity="0.16"/><path d="M4289.7 2264.7L-199.4 35.8" stroke="#454545" stroke-width="0.8" stroke-opacity="0.16"/><path d="M-1393.8 2264.7L744.0 32.5" stroke="#454545" stroke-width="0.8" stroke-opacity="0.16"/><path d="M5708.8 2264.7L-178.0 34.9" stroke="#454545" stroke-width="0.8" stroke-opacity="0.16"/><path d="M-2676.1 2264.7L725.4 31.9" stroke="#454545" stroke-width="0.8" stroke-opacity="0.16"/><path d="M7127.9 2264.7L-157.4 34.1" stroke="#454545" stroke-width="0.8" stroke-opacity="0.16"/><path d="M-3958.4 2264.7L707.5 31.3" stroke="#454545" stroke-width="0.8" stroke-opacity="0.16"/><path d="M8547.0 2264.7L-137.8 33.4" stroke="#454545" stroke-width="0.8" stroke-opacity="0.16"/><path d="M-5240.7 2264.7L690.3 30.7" stroke="#454545" stroke-width="0.8" stroke-opacity="0.16"/><path d="M11385.3 2264.7L-100.8 32.0" stroke="#454545" stroke-width="0.8" stroke-opacity="0.16"/><path d="M-7805.3 2264.7L657.5 29.6" stroke="#454545" stroke-width="0.8" stroke-opacity="0.16"/><path d="M12804.4 2264.7L-83.4 31.3" stroke="#454545" stroke-width="0.8" stroke-opacity="0.16"/><path d="M-9087.6 2264.7L641.9 29.0" stroke="#454545" stroke-width="0.8" stroke-opacity="0.16"/><path d="M14223.5 2264.7L-66.7 30.6" stroke="#454545" stroke-width="0.8" stroke-opacity="0.16"/><path d="M-10369.9 2264.7L626.9 28.5" stroke="#454545" stroke-width="0.8" stroke-opacity="0.16"/><path d="M15642.7 2264.7L-50.6 30.0" stroke="#454545" stroke-width="0.8" stroke-opacity="0.16"/><path d="M-11652.2 2264.7L612.3 28.0" stroke="#454545" stroke-width="0.8" stroke-opacity="0.16"/><path d="M17061.8 2264.7L-35.2 29.4" stroke="#454545" stroke-width="0.8" stroke-opacity="0.16"/><path d="M-12934.5 2264.7L598.2 27.6" stroke="#454545" stroke-width="0.8" stroke-opacity="0.16"/><path d="M18480.9 2264.7L-20.3 28.8" stroke="#454545" stroke-width="0.8" stroke-opacity="0.16"/><path d="M-14216.8 2264.7L584.6 27.1" stroke="#454545" stroke-width="0.8" stroke-opacity="0.16"/><path d="M19900.0 2264.7L-5.9 28.3" stroke="#454545" stroke-width="0.8" stroke-opacity="0.16"/><path d="M-15499.1 2264.7L571.3 26.6" stroke="#454545" stroke-width="0.8" stroke-opacity="0.16"/><path d="M21319.1 2264.7L7.9 27.8" stroke="#454545" stroke-width="0.8" stroke-opacity="0.16"/><path d="M-16781.4 2264.7L558.5 26.2" stroke="#454545" stroke-width="0.8" stroke-opacity="0.16"/><path d="M22738.3 2264.7L21.3 27.2" stroke="#454545" stroke-width="0.8" stroke-opacity="0.16"/><path d="M-18063.7 2264.7L546.0 25.8" stroke="#454545" stroke-width="0.8" stroke-opacity="0.16"/><path d="M25576.5 2264.7L46.7 26.3" stroke="#454545" stroke-width="0.8" stroke-opacity="0.16"/><path d="M-20628.3 2264.7L522.2 25.0" stroke="#454545" stroke-width="0.8" stroke-opacity="0.16"/><path d="M26995.6 2264.7L58.8 25.8" stroke="#454545" stroke-width="0.8" stroke-opacity="0.16"/><path d="M-21910.5 2264.7L510.8 24.6" stroke="#454545" stroke-width="0.8" stroke-opacity="0.16"/><path d="M28414.7 2264.7L70.5 25.3" stroke="#454545" stroke-width="0.8" stroke-opacity="0.16"/><path d="M-23192.8 2264.7L499.7 24.2" stroke="#454545" stroke-width="0.8" stroke-opacity="0.16"/><path d="M29833.9 2264.7L81.8 24.9" stroke="#454545" stroke-width="0.8" stroke-opacity="0.16"/><path d="M-24475.1 2264.7L488.9 23.9" stroke="#454545" stroke-width="0.8" stroke-opacity="0.16"/><path d="M31253.0 2264.7L92.7 24.5" stroke="#454545" stroke-width="0.8" stroke-opacity="0.16"/><path d="M-25757.4 2264.7L478.4 23.5" stroke="#454545" stroke-width="0.8" stroke-opacity="0.16"/><path d="M32672.1 2264.7L103.3 24.1" stroke="#454545" stroke-width="0.8" stroke-opacity="0.16"/><path d="M-27039.7 2264.7L468.2 23.2" stroke="#454545" stroke-width="0.8" stroke-opacity="0.16"/><path d="M34091.2 2264.7L113.6 23.7" stroke="#454545" stroke-width="0.8" stroke-opacity="0.16"/><path d="M-28322.0 2264.7L458.3 22.8" stroke="#454545" stroke-width="0.8" stroke-opacity="0.16"/><path d="M35510.3 2264.7L123.6 23.3" stroke="#454545" stroke-width="0.8" stroke-opacity="0.16"/><path d="M-29604.3 2264.7L448.7 22.5" stroke="#454545" stroke-width="0.8" stroke-opacity="0.16"/><path d="M36929.5 2264.7L133.3 22.9" stroke="#454545" stroke-width="0.8" stroke-opacity="0.16"/><path d="M-30886.6 2264.7L439.2 22.2" stroke="#454545" stroke-width="0.8" stroke-opacity="0.16"/><path d="M39767.7 2264.7L151.8 22.2" stroke="#454545" stroke-width="0.8" stroke-opacity="0.16"/><path d="M-33451.2 2264.7L421.1 21.6" stroke="#454545" stroke-width="0.8" stroke-opacity="0.16"/><path d="M41186.8 2264.7L160.7 21.8" stroke="#454545" stroke-width="0.8" stroke-opacity="0.16"/><path d="M-34733.5 2264.7L412.4 21.3" stroke="#454545" stroke-width="0.8" stroke-opacity="0.16"/><path d="M42605.9 2264.7L169.3 21.5" stroke="#454545" stroke-width="0.8" stroke-opacity="0.16"/><path d="M-36015.8 2264.7L403.9 21.0" stroke="#454545" stroke-width="0.8" stroke-opacity="0.16"/><path d="M44025.1 2264.7L177.7 21.2" stroke="#454545" stroke-width="0.8" stroke-opacity="0.16"/><path d="M-37298.1 2264.7L395.6 20.7" stroke="#454545" stroke-width="0.8" stroke-opacity="0.16"/><path d="M27574.1 1378.7L185.8 20.9" stroke="#454545" stroke-width="0.8" stroke-opacity="0.16"/><path d="M-38580.4 2264.7L387.5 20.4" stroke="#454545" stroke-width="0.8" stroke-opacity="0.16"/><path d="M15490.0 756.1L193.7 20.6" stroke="#454545" stroke-width="0.8" stroke-opacity="0.16"/><path d="M-39862.7 2264.7L379.6 20.2" stroke="#454545" stroke-width="0.8" stroke-opacity="0.16"/><path d="M10917.3 520.5L201.5 20.3" stroke="#454545" stroke-width="0.8" stroke-opacity="0.16"/><path d="M-41145.0 2264.7L371.9 19.9" stroke="#454545" stroke-width="0.8" stroke-opacity="0.16"/><path d="M8513.0 396.6L209.0 20.0" stroke="#454545" stroke-width="0.8" stroke-opacity="0.16"/><path d="M-42427.3 2264.7L364.4 19.6" stroke="#454545" stroke-width="0.8" stroke-opacity="0.16"/><path d="M7030.3 320.2L216.3 19.7" stroke="#454545" stroke-width="0.8" stroke-opacity="0.16"/><path d="M-43709.6 2264.7L357.0 19.4" stroke="#454545" stroke-width="0.8" stroke-opacity="0.16"/><path d="M5297.5 230.9L230.4 19.1" stroke="#454545" stroke-width="0.8" stroke-opacity="0.16"/><path d="M-46274.2 2264.7L342.8 18.9" stroke="#454545" stroke-width="0.8" stroke-opacity="0.16"/><path d="M4747.4 202.6L237.2 18.9" stroke="#454545" stroke-width="0.8" stroke-opacity="0.16"/><path d="M-27323.9 1315.8L335.9 18.7" stroke="#454545" stroke-width="0.8" stroke-opacity="0.16"/><path d="M4316.6 180.4L243.8 18.6" stroke="#454545" stroke-width="0.8" stroke-opacity="0.16"/><path d="M-16108.7 769.4L329.2 18.5" stroke="#454545" stroke-width="0.8" stroke-opacity="0.16"/><path d="M3970.2 162.5L250.3 18.4" stroke="#454545" stroke-width="0.8" stroke-opacity="0.16"/><path d="M-11467.9 543.3L322.6 18.2" stroke="#454545" stroke-width="0.8" stroke-opacity="0.16"/><path d="M3685.6 147.9L256.6 18.1" stroke="#454545" stroke-width="0.8" stroke-opacity="0.16"/><path d="M-8931.0 419.7L316.2 18.0" stroke="#454545" stroke-width="0.8" stroke-opacity="0.16"/><path d="M3447.5 135.6L262.8 17.9" stroke="#454545" stroke-width="0.8" stroke-opacity="0.16"/><path d="M-7331.6 341.8L309.9 17.8" stroke="#454545" stroke-width="0.8" stroke-opacity="0.16"/><path d="M3245.4 125.2L268.8 17.7" stroke="#454545" stroke-width="0.8" stroke-opacity="0.16"/><path d="M-6231.1 288.2L303.7 17.6" stroke="#454545" stroke-width="0.8" stroke-opacity="0.16"/><path d="M3071.8 116.2L274.7 17.4" stroke="#454545" stroke-width="0.8" stroke-opacity="0.16"/><path d="M-5427.6 249.0L297.7 17.4" stroke="#454545" stroke-width="0.8" stroke-opacity="0.16"/><path d="M2921.0 108.5L280.4 17.2" stroke="#454545" stroke-width="0.8" stroke-opacity="0.16"/><path d="M-4815.1 219.2L291.8 17.2" stroke="#454545" stroke-width="0.8" stroke-opacity="0.16"/></g><path d="M-46798.7 2264.7L-4332.8 195.7" stroke="#3c3c3c" stroke-width="1.1" stroke-opacity="0.8"/><path d="M44768.8 2264.7L2788.8 101.7" stroke="#3c3c3c" stroke-width="1.1" stroke-opacity="0.8"/><path d="M-32607.5 2264.7L-1571.4 88.8" stroke="#3c3c3c" stroke-width="1.1" stroke-opacity="0.8"/><path d="M31945.9 2264.7L1692.4 64.6" stroke="#3c3c3c" stroke-width="1.1" stroke-opacity="0.8"/><path d="M-18416.2 2264.7L-747.5 57.0" stroke="#3c3c3c" stroke-width="1.1" stroke-opacity="0.8"/><path d="M19122.9 2264.7L1173.8 47.0" stroke="#3c3c3c" stroke-width="1.1" stroke-opacity="0.8"/><path d="M-4225.0 2264.7L-351.6 41.7" stroke="#3c3c3c" stroke-width="1.1" stroke-opacity="0.8"/><path d="M6300.0 2264.7L871.5 36.8" stroke="#3c3c3c" stroke-width="1.1" stroke-opacity="0.8"/><path d="M9966.2 2264.7L-118.9 32.7" stroke="#3c3c3c" stroke-width="1.1" stroke-opacity="0.8"/><path d="M-6523.0 2264.7L673.6 30.1" stroke="#3c3c3c" stroke-width="1.1" stroke-opacity="0.8"/><path d="M24157.4 2264.7L34.2 26.7" stroke="#3c3c3c" stroke-width="1.1" stroke-opacity="0.8"/><path d="M-19346.0 2264.7L533.9 25.4" stroke="#3c3c3c" stroke-width="1.1" stroke-opacity="0.8"/><path d="M38348.6 2264.7L142.7 22.5" stroke="#3c3c3c" stroke-width="1.1" stroke-opacity="0.8"/><path d="M-32168.9 2264.7L430.1 21.9" stroke="#3c3c3c" stroke-width="1.1" stroke-opacity="0.8"/><path d="M6024.5 268.4L223.5 19.4" stroke="#3c3c3c" stroke-width="1.1" stroke-opacity="0.8"/><path d="M-44991.9 2264.7L349.9 19.2" stroke="#3c3c3c" stroke-width="1.1" stroke-opacity="0.8"/><path d="M2788.8 101.7L286.0 17.0" stroke="#3c3c3c" stroke-width="1.1" stroke-opacity="0.8"/><path d="M-4332.8 195.7L286.0 17.0" stroke="#3c3c3c" stroke-width="1.1" stroke-opacity="0.8"/><rect x="0" y="0" width="64" height="281" fill="#fff" fill-opacity="0.035"/><rect x="565" y="0" width="62" height="281" fill="#fff" fill-opacity="0.035"/></g></svg>
<div class="a" style="left:30px;top:71px;width:629px;height:1px;background:#a0a0a0;"></div>
<div class="a" style="left:30px;top:352px;width:629px;height:1px;background:#a0a0a0;"></div>
<div class="a" style="left:30px;top:71px;width:1px;height:282px;background:#a0a0a0;"></div>
<div class="a" style="left:658px;top:71px;width:1px;height:282px;background:#a0a0a0;"></div>
<svg class="a" style="left:31px;top:72px;" width="627" height="281" viewBox="0 0 627 281"><path d="M227.0 109.0L269.0 119.0" fill="none" stroke="#c05050" stroke-width="1.2" stroke-opacity="0.9" stroke-linejoin="round"/><path d="M225.0 108.5L231.0 107.5L230.0 111.5Z" fill="#c05050" stroke="none" stroke-width="0" /><path d="M183.0 182.0L189.0 177.5L190.0 182.0Z" fill="#5050b0" stroke="none" stroke-width="0" /><path d="M339.0 1.0L339.0 78.0" fill="none" stroke="#4aa04a" stroke-width="1.2" stroke-opacity="0.8" stroke-linejoin="round"/><path d="M257.0 99.0L269.0 81.0L282.9 83.0L298.8 85.3L314.1 87.4L332.0 90.0L349.0 113.0L349.0 113.0L349.0 132.0L348.0 151.0L345.0 170.0L335.0 190.0L322.0 210.5L313.4 207.0L304.0 203.2L295.9 199.9L287.6 196.5L280.2 193.5L274.0 191.0L269.0 175.0L262.0 156.0L258.0 138.0L257.0 118.0L257.0 99.0Z" fill="#636b78" stroke="none" stroke-width="0" /><path d="M349.0 98.0L349.0 113.0L349.0 132.0L348.0 151.0L345.0 170.0L335.0 190.0L322.0 210.5L335.2 205.6L349.5 200.3L362.7 195.4L374.8 190.9L386.9 186.5L399.0 182.0L402.0 166.0L410.0 152.0L415.0 135.0L417.0 116.0L418.0 97.0L418.0 78.0Z" fill="#3d4450" stroke="none" stroke-width="0" /><path d="M269.0 81.0L355.0 69.0L418.0 78.0L332.0 90.0Z" fill="#5a6472" stroke="none" stroke-width="0" /><path d="M332.3 89.4L325.5 88.5L335.6 87.1L342.3 88.0Z" fill="#232a34" stroke="none" stroke-width="0" /><path d="M346.6 87.4L339.9 86.5L349.9 85.1L356.6 86.0Z" fill="#232a34" stroke="none" stroke-width="0" /><path d="M360.9 85.4L354.2 84.5L364.2 83.1L371.0 84.0Z" fill="#232a34" stroke="none" stroke-width="0" /><path d="M375.3 83.4L368.5 82.5L378.6 81.1L385.3 82.0Z" fill="#232a34" stroke="none" stroke-width="0" /><path d="M389.6 81.4L382.9 80.5L392.9 79.1L399.6 80.0Z" fill="#232a34" stroke="none" stroke-width="0" /><path d="M403.9 79.4L397.2 78.5L407.2 77.1L414.0 78.0Z" fill="#232a34" stroke="none" stroke-width="0" /><path d="M321.8 87.9L315.0 87.0L325.1 85.6L331.8 86.5Z" fill="#232a34" stroke="none" stroke-width="0" /><path d="M336.1 85.9L329.4 85.0L339.4 83.6L346.1 84.5Z" fill="#232a34" stroke="none" stroke-width="0" /><path d="M350.4 83.9L343.7 83.0L353.7 81.6L360.5 82.5Z" fill="#232a34" stroke="none" stroke-width="0" /><path d="M364.8 81.9L358.0 81.0L368.1 79.6L374.8 80.5Z" fill="#232a34" stroke="none" stroke-width="0" /><path d="M379.1 79.9L372.4 79.0L382.4 77.6L389.1 78.5Z" fill="#232a34" stroke="none" stroke-width="0" /><path d="M393.4 77.9L386.7 77.0L396.7 75.6L403.5 76.5Z" fill="#232a34" stroke="none" stroke-width="0" /><path d="M311.3 86.4L304.5 85.5L314.6 84.1L321.3 85.0Z" fill="#232a34" stroke="none" stroke-width="0" /><path d="M325.6 84.4L318.9 83.5L328.9 82.1L335.6 83.0Z" fill="#232a34" stroke="none" stroke-width="0" /><path d="M339.9 82.4L333.2 81.5L343.2 80.1L350.0 81.0Z" fill="#232a34" stroke="none" stroke-width="0" /><path d="M354.3 80.4L347.5 79.5L357.6 78.1L364.3 79.0Z" fill="#232a34" stroke="none" stroke-width="0" /><path d="M368.6 78.4L361.9 77.5L371.9 76.1L378.6 77.0Z" fill="#232a34" stroke="none" stroke-width="0" /><path d="M382.9 76.4L376.2 75.5L386.2 74.1L393.0 75.0Z" fill="#232a34" stroke="none" stroke-width="0" /><path d="M300.8 84.9L294.0 84.0L304.1 82.6L310.8 83.5Z" fill="#232a34" stroke="none" stroke-width="0" /><path d="M315.1 82.9L308.4 82.0L318.4 80.6L325.1 81.5Z" fill="#232a34" stroke="none" stroke-width="0" /><path d="M329.4 80.9L322.7 80.0L332.7 78.6L339.5 79.5Z" fill="#232a34" stroke="none" stroke-width="0" /><path d="M343.8 78.9L337.0 78.0L347.1 76.6L353.8 77.5Z" fill="#232a34" stroke="none" stroke-width="0" /><path d="M358.1 76.9L351.4 76.0L361.4 74.6L368.1 75.5Z" fill="#232a34" stroke="none" stroke-width="0" /><path d="M372.4 74.9L365.7 74.0L375.7 72.6L382.5 73.5Z" fill="#232a34" stroke="none" stroke-width="0" /><path d="M290.3 83.4L283.5 82.5L293.6 81.1L300.3 82.0Z" fill="#232a34" stroke="none" stroke-width="0" /><path d="M304.6 81.4L297.9 80.5L307.9 79.1L314.6 80.0Z" fill="#232a34" stroke="none" stroke-width="0" /><path d="M318.9 79.4L312.2 78.5L322.2 77.1L329.0 78.0Z" fill="#232a34" stroke="none" stroke-width="0" /><path d="M333.3 77.4L326.5 76.5L336.6 75.1L343.3 76.0Z" fill="#232a34" stroke="none" stroke-width="0" /><path d="M347.6 75.4L340.9 74.5L350.9 73.1L357.6 74.0Z" fill="#232a34" stroke="none" stroke-width="0" /><path d="M361.9 73.4L355.2 72.5L365.2 71.1L372.0 72.0Z" fill="#232a34" stroke="none" stroke-width="0" /><path d="M279.8 81.9L273.0 81.0L283.1 79.6L289.8 80.5Z" fill="#232a34" stroke="none" stroke-width="0" /><path d="M294.1 79.9L287.4 79.0L297.4 77.6L304.1 78.5Z" fill="#232a34" stroke="none" stroke-width="0" /><path d="M308.4 77.9L301.7 77.0L311.7 75.6L318.5 76.5Z" fill="#232a34" stroke="none" stroke-width="0" /><path d="M322.8 75.9L316.0 75.0L326.1 73.6L332.8 74.5Z" fill="#232a34" stroke="none" stroke-width="0" /><path d="M337.1 73.9L330.4 73.0L340.4 71.6L347.1 72.5Z" fill="#232a34" stroke="none" stroke-width="0" /><path d="M351.4 71.9L344.7 71.0L354.7 69.6L361.5 70.5Z" fill="#232a34" stroke="none" stroke-width="0" /><path d="M332.0 90.0L269.0 81.0" fill="none" stroke="#8db6ea" stroke-width="0.8" stroke-opacity="0.7" stroke-linejoin="round"/><path d="M332.0 90.0L418.0 78.0" fill="none" stroke="#8db6ea" stroke-width="0.8" stroke-opacity="0.7" stroke-linejoin="round"/><path d="M346.3 88.0L283.3 79.0" fill="none" stroke="#8db6ea" stroke-width="0.8" stroke-opacity="0.7" stroke-linejoin="round"/><path d="M321.5 88.5L407.5 76.5" fill="none" stroke="#8db6ea" stroke-width="0.8" stroke-opacity="0.7" stroke-linejoin="round"/><path d="M360.7 86.0L297.7 77.0" fill="none" stroke="#8db6ea" stroke-width="0.8" stroke-opacity="0.7" stroke-linejoin="round"/><path d="M311.0 87.0L397.0 75.0" fill="none" stroke="#8db6ea" stroke-width="0.8" stroke-opacity="0.7" stroke-linejoin="round"/><path d="M375.0 84.0L312.0 75.0" fill="none" stroke="#8db6ea" stroke-width="0.8" stroke-opacity="0.7" stroke-linejoin="round"/><path d="M300.5 85.5L386.5 73.5" fill="none" stroke="#8db6ea" stroke-width="0.8" stroke-opacity="0.7" stroke-linejoin="round"/><path d="M389.3 82.0L326.3 73.0" fill="none" stroke="#8db6ea" stroke-width="0.8" stroke-opacity="0.7" stroke-linejoin="round"/><path d="M290.0 84.0L376.0 72.0" fill="none" stroke="#8db6ea" stroke-width="0.8" stroke-opacity="0.7" stroke-linejoin="round"/><path d="M403.7 80.0L340.7 71.0" fill="none" stroke="#8db6ea" stroke-width="0.8" stroke-opacity="0.7" stroke-linejoin="round"/><path d="M279.5 82.5L365.5 70.5" fill="none" stroke="#8db6ea" stroke-width="0.8" stroke-opacity="0.7" stroke-linejoin="round"/><path d="M418.0 78.0L355.0 69.0" fill="none" stroke="#8db6ea" stroke-width="0.8" stroke-opacity="0.7" stroke-linejoin="round"/><path d="M269.0 81.0L355.0 69.0" fill="none" stroke="#8db6ea" stroke-width="0.8" stroke-opacity="0.7" stroke-linejoin="round"/><path d="M257.0 99.0L269.0 81.0L282.9 83.0L298.8 85.3L314.1 87.4L332.0 90.0L349.0 113.0" fill="none" stroke="#8db6ea" stroke-width="1" stroke-opacity="1" stroke-linejoin="round"/><path d="M257.0 99.0L269.0 100.8L283.0 103.0L299.0 105.4L314.5 107.8L332.5 110.5L349.0 113.0" fill="none" stroke="#8db6ea" stroke-width="1" stroke-opacity="1" stroke-linejoin="round"/><path d="M257.0 118.0L269.0 119.8L283.0 122.0L299.0 124.4L314.5 126.8L332.5 129.5L349.0 132.0" fill="none" stroke="#8db6ea" stroke-width="1" stroke-opacity="1" stroke-linejoin="round"/><path d="M258.0 138.0L269.7 139.7L283.5 141.7L299.1 143.9L314.2 146.1L331.9 148.7L348.0 151.0" fill="none" stroke="#8db6ea" stroke-width="1" stroke-opacity="1" stroke-linejoin="round"/><path d="M262.0 156.0L272.8 157.8L285.5 160.0L299.9 162.4L313.9 164.8L330.1 167.5L345.0 170.0" fill="none" stroke="#8db6ea" stroke-width="1" stroke-opacity="1" stroke-linejoin="round"/><path d="M269.0 175.0L277.6 176.9L287.7 179.2L299.2 181.9L310.2 184.4L323.2 187.3L335.0 190.0" fill="none" stroke="#8db6ea" stroke-width="1" stroke-opacity="1" stroke-linejoin="round"/><path d="M274.0 191.0L280.2 193.5L287.6 196.5L295.9 199.9L304.0 203.2L313.4 207.0L322.0 210.5" fill="none" stroke="#8db6ea" stroke-width="1" stroke-opacity="1" stroke-linejoin="round"/><path d="M257.0 99.0L257.0 99.0L257.0 118.0L258.0 138.0L262.0 156.0L269.0 175.0L274.0 191.0" fill="none" stroke="#8db6ea" stroke-width="1" stroke-opacity="1" stroke-linejoin="round"/><path d="M269.0 81.0L269.0 100.8L269.0 119.8L269.7 139.7L272.8 157.8L277.6 176.9L280.2 193.5" fill="none" stroke="#8db6ea" stroke-width="1" stroke-opacity="1" stroke-linejoin="round"/><path d="M282.9 83.0L283.0 103.0L283.0 122.0L283.5 141.7L285.5 160.0L287.7 179.2L287.6 196.5" fill="none" stroke="#8db6ea" stroke-width="1" stroke-opacity="1" stroke-linejoin="round"/><path d="M298.8 85.3L299.0 105.4L299.0 124.4L299.1 143.9L299.9 162.4L299.2 181.9L295.9 199.9" fill="none" stroke="#8db6ea" stroke-width="1" stroke-opacity="1" stroke-linejoin="round"/><path d="M314.1 87.4L314.5 107.8L314.5 126.8L314.2 146.1L313.9 164.8L310.2 184.4L304.0 203.2" fill="none" stroke="#8db6ea" stroke-width="1" stroke-opacity="1" stroke-linejoin="round"/><path d="M332.0 90.0L332.5 110.5L332.5 129.5L331.9 148.7L330.1 167.5L323.2 187.3L313.4 207.0" fill="none" stroke="#8db6ea" stroke-width="1" stroke-opacity="1" stroke-linejoin="round"/><path d="M349.0 113.0L349.0 113.0L349.0 132.0L348.0 151.0L345.0 170.0L335.0 190.0L322.0 210.5" fill="none" stroke="#8db6ea" stroke-width="1" stroke-opacity="1" stroke-linejoin="round"/><path d="M349.0 98.0L360.8 94.6L373.6 90.9L385.5 87.4L396.3 84.3L407.2 81.1L418.0 78.0" fill="none" stroke="#8db6ea" stroke-width="1" stroke-opacity="1" stroke-linejoin="round"/><path d="M349.0 113.0L360.8 110.3L373.6 107.3L385.5 104.5L396.3 102.0L407.2 99.5L418.0 97.0" fill="none" stroke="#8db6ea" stroke-width="1" stroke-opacity="1" stroke-linejoin="round"/><path d="M349.0 132.0L360.6 129.3L373.3 126.3L385.0 123.5L395.6 121.0L406.3 118.5L417.0 116.0" fill="none" stroke="#8db6ea" stroke-width="1" stroke-opacity="1" stroke-linejoin="round"/><path d="M348.0 151.0L359.5 148.3L371.9 145.3L383.4 142.5L394.0 140.0L404.5 137.5L415.0 135.0" fill="none" stroke="#8db6ea" stroke-width="1" stroke-opacity="1" stroke-linejoin="round"/><path d="M345.0 170.0L356.1 166.9L368.2 163.6L379.4 160.5L389.6 157.7L399.8 154.8L410.0 152.0" fill="none" stroke="#8db6ea" stroke-width="1" stroke-opacity="1" stroke-linejoin="round"/><path d="M335.0 190.0L346.5 185.9L358.9 181.4L370.4 177.3L381.0 173.5L391.5 169.8L402.0 166.0" fill="none" stroke="#8db6ea" stroke-width="1" stroke-opacity="1" stroke-linejoin="round"/><path d="M322.0 210.5L335.2 205.6L349.5 200.3L362.7 195.4L374.8 190.9L386.9 186.5L399.0 182.0" fill="none" stroke="#8db6ea" stroke-width="1" stroke-opacity="1" stroke-linejoin="round"/><path d="M349.0 98.0L349.0 113.0L349.0 132.0L348.0 151.0L345.0 170.0L335.0 190.0L322.0 210.5" fill="none" stroke="#8db6ea" stroke-width="1" stroke-opacity="1" stroke-linejoin="round"/><path d="M360.8 94.6L360.8 110.3L360.6 129.3L359.5 148.3L356.1 166.9L346.5 185.9L335.2 205.6" fill="none" stroke="#8db6ea" stroke-width="1" stroke-opacity="1" stroke-linejoin="round"/><path d="M373.6 90.9L373.6 107.3L373.3 126.3L371.9 145.3L368.2 163.6L358.9 181.4L349.5 200.3" fill="none" stroke="#8db6ea" stroke-width="1" stroke-opacity="1" stroke-linejoin="round"/><path d="M385.5 87.4L385.5 104.5L385.0 123.5L383.4 142.5L379.4 160.5L370.4 177.3L362.7 195.4" fill="none" stroke="#8db6ea" stroke-width="1" stroke-opacity="1" stroke-linejoin="round"/><path d="M396.3 84.3L396.3 102.0L395.6 121.0L394.0 140.0L389.6 157.7L381.0 173.5L374.8 190.9" fill="none" stroke="#8db6ea" stroke-width="1" stroke-opacity="1" stroke-linejoin="round"/><path d="M407.2 81.1L407.2 99.5L406.3 118.5L404.5 137.5L399.8 154.8L391.5 169.8L386.9 186.5" fill="none" stroke="#8db6ea" stroke-width="1" stroke-opacity="1" stroke-linejoin="round"/><path d="M418.0 78.0L418.0 97.0L417.0 116.0L415.0 135.0L410.0 152.0L402.0 166.0L399.0 182.0" fill="none" stroke="#8db6ea" stroke-width="1" stroke-opacity="1" stroke-linejoin="round"/><path d="M285.0 117.0L290.5 124.0L285.0 131.0L279.5 124.0Z" fill="#5d6572" stroke="#8db6ea" stroke-width="1" /><path d="M314.5 122.0L320.0 129.0L314.5 136.0L309.0 129.0Z" fill="#5d6572" stroke="#8db6ea" stroke-width="1" /><path d="M227.0 55.0L276.0 78.0L269.0 81.0Z" fill="#252a32" stroke="none" stroke-width="0" /><path d="M227.0 55.0L269.0 81.0L257.0 99.0Z" fill="#6c7482" stroke="#8db6ea" stroke-width="0.9" /><path d="M370.0 73.0L367.5 88.0L349.0 113.0Z" fill="#252a32" stroke="none" stroke-width="0" /><path d="M332.0 90.0L370.0 73.0L349.0 113.0Z" fill="#7a818c" stroke="#8db6ea" stroke-width="0.9" /><path d="M185.0 181.0L297.0 146.0" fill="none" stroke="#5050b0" stroke-width="1.3" stroke-opacity="0.85" stroke-linejoin="round"/><circle cx="542" cy="107" r="7" fill="none" stroke="#e8e8e8" stroke-width="1.3"/></svg>
<svg class="a" style="left:36px;top:296px;" width="30" height="40" viewBox="0 0 30 40"><path d="M24 8V27" stroke="#40c040" stroke-width="1.1"/><text x="21" y="9" font-family="Liberation Sans" font-size="7" fill="#40c040">Y</text><path d="M24 27L12 27" stroke="#c04848" stroke-width="1"/><text x="6" y="26" font-family="Liberation Sans" font-size="7" fill="#c04848">X</text><path d="M24 27L12 31" stroke="#5050d0" stroke-width="1"/><text x="6" y="35" font-family="Liberation Sans" font-size="7" fill="#5050d0">Z</text></svg>
<div class="a" style="left:33px;top:72px;width:38px;height:15px;background:#6e6e6e;opacity:0.85"></div>
<div class="t" style="left:35px;top:75px;font-size:9px;line-height:11px;color:#e0e0e0;">透视视图</div>
<div class="a" style="left:573px;top:336px;width:85px;height:16px;background:#5a5a5a;opacity:0.85"></div>
<div class="t" style="left:576px;top:338px;font-size:9px;line-height:11px;color:#dedede;">网格间距 : 100 cm</div>
<div class="a" style="left:29px;top:353px;width:633px;height:149px;background:#474747;"></div>
<div class="a" style="left:30px;top:356px;width:630px;height:18px;background:#393939;"></div>
<svg class="a" style="left:30px;top:355px;" width="578" height="20" viewBox="0 0 578 20"><path d="M13.0 14V20" stroke="#aaa" stroke-width="0.8"/><rect x="12.5" y="17" width="1" height="1" fill="#777"/><rect x="18.7" y="17" width="1" height="1" fill="#777"/><rect x="24.8" y="17" width="1" height="1" fill="#777"/><rect x="31.0" y="17" width="1" height="1" fill="#777"/><rect x="37.1" y="17" width="1" height="1" fill="#777"/><rect x="43.3" y="17" width="1" height="1" fill="#777"/><rect x="49.4" y="17" width="1" height="1" fill="#777"/><rect x="55.6" y="17" width="1" height="1" fill="#777"/><rect x="61.7" y="17" width="1" height="1" fill="#777"/><rect x="67.9" y="17" width="1" height="1" fill="#777"/><path d="M74.6 14V20" stroke="#aaa" stroke-width="0.8"/><rect x="74.1" y="17" width="1" height="1" fill="#777"/><rect x="80.2" y="17" width="1" height="1" fill="#777"/><rect x="86.4" y="17" width="1" height="1" fill="#777"/><rect x="92.5" y="17" width="1" height="1" fill="#777"/><rect x="98.7" y="17" width="1" height="1" fill="#777"/><rect x="104.8" y="17" width="1" height="1" fill="#777"/><rect x="111.0" y="17" width="1" height="1" fill="#777"/><rect x="117.1" y="17" width="1" height="1" fill="#777"/><rect x="123.3" y="17" width="1" height="1" fill="#777"/><rect x="129.4" y="17" width="1" height="1" fill="#777"/><path d="M136.1 14V20" stroke="#aaa" stroke-width="0.8"/><rect x="135.6" y="17" width="1" height="1" fill="#777"/><rect x="141.8" y="17" width="1" height="1" fill="#777"/><rect x="147.9" y="17" width="1" height="1" fill="#777"/><rect x="154.1" y="17" width="1" height="1" fill="#777"/><rect x="160.2" y="17" width="1" height="1" fill="#777"/><rect x="166.4" y="17" width="1" height="1" fill="#777"/><rect x="172.5" y="17" width="1" height="1" fill="#777"/><rect x="178.7" y="17" width="1" height="1" fill="#777"/><rect x="184.8" y="17" width="1" height="1" fill="#777"/><rect x="191.0" y="17" width="1" height="1" fill="#777"/><path d="M197.7 14V20" stroke="#aaa" stroke-width="0.8"/><rect x="197.2" y="17" width="1" height="1" fill="#777"/><rect x="203.3" y="17" width="1" height="1" fill="#777"/><rect x="209.5" y="17" width="1" height="1" fill="#777"/><rect x="215.6" y="17" width="1" height="1" fill="#777"/><rect x="221.8" y="17" width="1" height="1" fill="#777"/><rect x="227.9" y="17" width="1" height="1" fill="#777"/><rect x="234.1" y="17" width="1" height="1" fill="#777"/><rect x="240.2" y="17" width="1" height="1" fill="#777"/><rect x="246.4" y="17" width="1" height="1" fill="#777"/><rect x="252.5" y="17" width="1" height="1" fill="#777"/><path d="M259.2 14V20" stroke="#aaa" stroke-width="0.8"/><rect x="258.7" y="17" width="1" height="1" fill="#777"/><rect x="264.9" y="17" width="1" height="1" fill="#777"/><rect x="271.0" y="17" width="1" height="1" fill="#777"/><rect x="277.2" y="17" width="1" height="1" fill="#777"/><rect x="283.3" y="17" width="1" height="1" fill="#777"/><rect x="289.5" y="17" width="1" height="1" fill="#777"/><rect x="295.6" y="17" width="1" height="1" fill="#777"/><rect x="301.8" y="17" width="1" height="1" fill="#777"/><rect x="307.9" y="17" width="1" height="1" fill="#777"/><rect x="314.1" y="17" width="1" height="1" fill="#777"/><path d="M320.8 14V20" stroke="#aaa" stroke-width="0.8"/><rect x="320.2" y="17" width="1" height="1" fill="#777"/><rect x="326.4" y="17" width="1" height="1" fill="#777"/><rect x="332.6" y="17" width="1" height="1" fill="#777"/><rect x="338.7" y="17" width="1" height="1" fill="#777"/><rect x="344.9" y="17" width="1" height="1" fill="#777"/><rect x="351.0" y="17" width="1" height="1" fill="#777"/><rect x="357.2" y="17" width="1" height="1" fill="#777"/><rect x="363.3" y="17" width="1" height="1" fill="#777"/><rect x="369.5" y="17" width="1" height="1" fill="#777"/><rect x="375.6" y="17" width="1" height="1" fill="#777"/><path d="M382.3 14V20" stroke="#aaa" stroke-width="0.8"/><rect x="381.8" y="17" width="1" height="1" fill="#777"/><rect x="388.0" y="17" width="1" height="1" fill="#777"/><rect x="394.1" y="17" width="1" height="1" fill="#777"/><rect x="400.3" y="17" width="1" height="1" fill="#777"/><rect x="406.4" y="17" width="1" height="1" fill="#777"/><rect x="412.6" y="17" width="1" height="1" fill="#777"/><rect x="418.7" y="17" width="1" height="1" fill="#777"/><rect x="424.9" y="17" width="1" height="1" fill="#777"/><rect x="431.0" y="17" width="1" height="1" fill="#777"/><rect x="437.2" y="17" width="1" height="1" fill="#777"/><path d="M443.9 14V20" stroke="#aaa" stroke-width="0.8"/><rect x="443.4" y="17" width="1" height="1" fill="#777"/><rect x="449.5" y="17" width="1" height="1" fill="#777"/><rect x="455.7" y="17" width="1" height="1" fill="#777"/><rect x="461.8" y="17" width="1" height="1" fill="#777"/><rect x="468.0" y="17" width="1" height="1" fill="#777"/><rect x="474.1" y="17" width="1" height="1" fill="#777"/><rect x="480.3" y="17" width="1" height="1" fill="#777"/><rect x="486.4" y="17" width="1" height="1" fill="#777"/><rect x="492.6" y="17" width="1" height="1" fill="#777"/><rect x="498.7" y="17" width="1" height="1" fill="#777"/><path d="M505.4 14V20" stroke="#aaa" stroke-width="0.8"/><rect x="504.9" y="17" width="1" height="1" fill="#777"/><rect x="511.1" y="17" width="1" height="1" fill="#777"/><rect x="517.2" y="17" width="1" height="1" fill="#777"/><rect x="523.4" y="17" width="1" height="1" fill="#777"/><rect x="529.5" y="17" width="1" height="1" fill="#777"/><rect x="535.7" y="17" width="1" height="1" fill="#777"/><rect x="541.8" y="17" width="1" height="1" fill="#777"/><rect x="548.0" y="17" width="1" height="1" fill="#777"/><rect x="554.1" y="17" width="1" height="1" fill="#777"/><rect x="560.3" y="17" width="1" height="1" fill="#777"/><path d="M567.0 14V20" stroke="#aaa" stroke-width="0.8"/><rect x="566.5" y="17" width="1" height="1" fill="#777"/></svg>
<div class="t" style="left:47px;top:358px;font-size:9px;line-height:11px;color:#d0d0d0;">0</div>
<div class="t" style="left:89.6px;top:358px;width:30px;text-align:center;font-size:10px;line-height:11px;color:#d0d0d0">10</div>
<div class="t" style="left:151.1px;top:358px;width:30px;text-align:center;font-size:10px;line-height:11px;color:#d0d0d0">20</div>
<div class="t" style="left:212.7px;top:358px;width:30px;text-align:center;font-size:10px;line-height:11px;color:#d0d0d0">30</div>
<div class="t" style="left:274.2px;top:358px;width:30px;text-align:center;font-size:10px;line-height:11px;color:#d0d0d0">40</div>
<div class="t" style="left:335.8px;top:358px;width:30px;text-align:center;font-size:10px;line-height:11px;color:#d0d0d0">50</div>
<div class="t" style="left:397.3px;top:358px;width:30px;text-align:center;font-size:10px;line-height:11px;color:#d0d0d0">60</div>
<div class="t" style="left:458.9px;top:358px;width:30px;text-align:center;font-size:10px;line-height:11px;color:#d0d0d0">70</div>
<div class="t" style="left:520.4px;top:358px;width:30px;text-align:center;font-size:10px;line-height:11px;color:#d0d0d0">80</div>
<div class="t" style="left:582.0px;top:358px;width:30px;text-align:center;font-size:10px;line-height:11px;color:#d0d0d0">90</div>
<div class="a" style="left:39px;top:357px;width:7px;height:13px;background:#40d070;"></div>
<div class="a" style="left:607px;top:358px;width:50px;height:14px;background:#363636;border-radius:1px"></div>
<div class="t" style="left:612px;top:360px;font-size:9px;line-height:11px;color:#cfcfcf;">0 F</div>
<div class="t" style="left:650px;top:360px;font-size:7px;line-height:9px;color:#999;">⇕</div>
<div class="a" style="left:30px;top:375px;width:630px;height:27px;background:#474747;"></div>
<svg class="a" style="left:33px;top:380px" width="4" height="16"><g fill="#6a6a6a"><rect x="0" y="0" width="1" height="1"/><rect x="0" y="2" width="1" height="1"/><rect x="0" y="4" width="1" height="1"/><rect x="0" y="6" width="1" height="1"/><rect x="0" y="8" width="1" height="1"/><rect x="0" y="10" width="1" height="1"/><rect x="0" y="12" width="1" height="1"/><rect x="0" y="14" width="1" height="1"/><rect x="2" y="0" width="1" height="1"/><rect x="2" y="2" width="1" height="1"/><rect x="2" y="4" width="1" height="1"/><rect x="2" y="6" width="1" height="1"/><rect x="2" y="8" width="1" height="1"/><rect x="2" y="10" width="1" height="1"/><rect x="2" y="12" width="1" height="1"/><rect x="2" y="14" width="1" height="1"/></g></svg>
<div class="a" style="left:38px;top:381px;width:50px;height:14px;background:#363636;border-radius:2px"></div>
<div class="t" style="left:43px;top:383px;font-size:9px;line-height:11px;color:#cfcfcf;">0 F</div>
<svg class="a" style="left:81px;top:384px;" width="4" height="8" viewBox="0 0 4 8"><path d="M2 0L4 3H0Z M2 8L4 5H0Z" fill="#8a8a8a"/></svg>
<div class="a" style="left:94px;top:381px;width:111px;height:14px;background:linear-gradient(#7a7a7a,#606060);border-radius:4px"></div>
<svg class="a" style="left:98px;top:383px;" width="8" height="10" viewBox="0 0 8 10"><path d="M6 1L1 5L6 9Z" fill="#9a9a9a"/></svg>
<svg class="a" style="left:193px;top:383px;" width="8" height="10" viewBox="0 0 8 10"><path d="M2 1L7 5L2 9Z" fill="#d8d8d8"/></svg>
<div class="t" style="left:106px;top:383px;font-size:9px;line-height:11px;color:#5a5a5a;">0 F</div>
<div class="t" style="left:173px;top:383px;font-size:9px;line-height:11px;color:#5a5a5a;">90 F</div>
<div class="a" style="left:210px;top:381px;width:51px;height:14px;background:#363636;border-radius:2px"></div>
<div class="t" style="left:215px;top:383px;font-size:9px;line-height:11px;color:#cfcfcf;">90 F</div>
<svg class="a" style="left:253px;top:384px;" width="4" height="8" viewBox="0 0 4 8"><path d="M2 0L4 3H0Z M2 8L4 5H0Z" fill="#8a8a8a"/></svg>
<div class="a" style="left:271px;top:377px;width:20px;height:22px;background:#6e6e6e;"></div>
<svg class="a" style="left:271px;top:377px;" width="20" height="22" viewBox="0 0 20 22"><path d="M4 6V16" stroke="#111" stroke-width="2.2"/><path d="M16 6L6 11L16 16L12 11Z" fill="#111"/></svg>
<div class="a" style="left:301px;top:377px;width:107px;height:22px;background:#6e6e6e;"></div>
<svg class="a" style="left:301px;top:377px;" width="107" height="22" viewBox="0 0 107 22"><path d="M17 6A5.5 5.5 0 1 0 17 16" fill="none" stroke="#111" stroke-width="3"/><path d="M15 3L20 6L15 9Z" fill="#111"/><path d="M28 11L34 7V15Z" fill="#111"/><path d="M37 6Q34 11 37 16" fill="none" stroke="#111" stroke-width="1.5"/><path d="M47 5L60 11L47 17L50 11Z" fill="#30d070" stroke="#1a4a2a" stroke-width="0.8"/><path d="M66 6Q69 11 66 16" fill="none" stroke="#111" stroke-width="1.5"/><path d="M70 7L77 11L70 15Z" fill="#111"/><path d="M90 6A5.5 5.5 0 1 1 90 16" fill="none" stroke="#111" stroke-width="3"/><path d="M92 3L87 6L92 9Z" fill="#111"/></svg>
<div class="a" style="left:418px;top:377px;width:20px;height:22px;background:#6e6e6e;"></div>
<svg class="a" style="left:418px;top:377px;" width="20" height="22" viewBox="0 0 20 22"><path d="M4 6L14 11L4 16L8 11Z" fill="#111"/><path d="M16 6V16" stroke="#111" stroke-width="2.2"/></svg>
<div class="a" style="left:447px;top:377px;width:64px;height:22px;background:#6e6e6e;"></div>
<svg class="a" style="left:447px;top:377px;" width="64" height="22" viewBox="0 0 64 22"><circle cx="11" cy="11" r="8" fill="#e05050" stroke="#3a1a1a" stroke-width="1.5"/><path d="M7 15L14 8" stroke="#111" stroke-width="2.2"/><circle cx="14" cy="8" r="2" fill="#111"/><circle cx="32" cy="11" r="8" fill="#e05050" stroke="#3a1a1a" stroke-width="1.5"/><path d="M29 7Q26 11 29 15M35 7Q38 11 35 15" fill="none" stroke="#111" stroke-width="1.8"/><circle cx="53" cy="11" r="8" fill="#e05050" stroke="#3a1a1a" stroke-width="1.5"/><text x="53" y="15.5" font-family="Liberation Sans" font-weight="bold" font-size="12" text-anchor="middle" fill="#111">?</text></svg>
<div class="a" style="left:521px;top:377px;width:86px;height:22px;background:#a6c4ec;"></div>
<svg class="a" style="left:521px;top:377px;" width="107" height="22" viewBox="0 0 107 22"><path d="M11 4V18M4 11H18" stroke="#f08a20" stroke-width="2"/><path d="M11 2L13.5 5H8.5Z M11 20L13.5 17H8.5Z M2 11L5 8.5V13.5Z M20 11L17 8.5V13.5Z" fill="#f08a20"/><rect x="25" y="4" width="14" height="14" rx="1" fill="#f0a030" stroke="#5a3010" stroke-width="1"/><path d="M32 18V11H25M32 11L39 4" fill="none" stroke="#5a3010" stroke-width="0.9"/><g transform="rotate(-69 53 11)"><circle cx="53" cy="11" r="6.8" fill="none" stroke="#5a3010" stroke-width="3.4" stroke-dasharray="18.6 2.8"/><circle cx="53" cy="11" r="6.8" fill="none" stroke="#f08a20" stroke-width="2.2" stroke-dasharray="18.6 2.8"/></g><circle cx="75" cy="11" r="8.5" fill="none" stroke="#8a6a4a" stroke-width="1.6"/><text x="75" y="15.5" font-family="Liberation Sans" font-weight="bold" font-size="12" text-anchor="middle" fill="#1a2a4a">P</text></svg>
<div class="a" style="left:607px;top:377px;width:21px;height:22px;background:#6e6e6e;"></div>
<svg class="a" style="left:607px;top:377px;" width="21" height="22" viewBox="0 0 21 22"><circle cx="5" cy="5" r="1.9" fill="#f08a20" stroke="#3a2a10" stroke-width="0.3"/><circle cx="5" cy="11" r="1.9" fill="#f08a20" stroke="#3a2a10" stroke-width="0.3"/><circle cx="5" cy="17" r="1.9" fill="#111" stroke="#3a2a10" stroke-width="0.3"/><circle cx="10" cy="5" r="1.9" fill="#f08a20" stroke="#3a2a10" stroke-width="0.3"/><circle cx="10" cy="11" r="1.9" fill="#f08a20" stroke="#3a2a10" stroke-width="0.3"/><circle cx="10" cy="17" r="1.9" fill="#111" stroke="#3a2a10" stroke-width="0.3"/><circle cx="15" cy="5" r="1.9" fill="#111" stroke="#3a2a10" stroke-width="0.3"/><circle cx="15" cy="11" r="1.9" fill="#111" stroke="#3a2a10" stroke-width="0.3"/><circle cx="15" cy="17" r="1.9" fill="#111" stroke="#3a2a10" stroke-width="0.3"/></svg>
<div class="a" style="left:637px;top:377px;width:21px;height:22px;background:#a6c4ec;"></div>
<svg class="a" style="left:637px;top:377px;" width="21" height="22" viewBox="0 0 21 22"><rect x="6" y="3" width="9" height="16" fill="#f0a030" stroke="#3a2010" stroke-width="1"/><path d="M6 8H15M6 13H15" stroke="#3a2010" stroke-width="1.5"/><path d="M18 21h3v-3Z" fill="#111"/></svg>
<div class="a" style="left:30px;top:402px;width:391px;height:94px;background:#474747;"></div>
<div class="a" style="left:30px;top:402px;width:391px;height:18px;background:#4a4a4a;"></div>
<div class="a" style="left:30px;top:420px;width:391px;height:1px;background:#363636;"></div>
<svg class="a" style="left:36px;top:407px" width="9" height="9"><g stroke="#7c7c7c" stroke-width="0.9" fill="none"><path d="M0 0.5H9M0.5 0V9"/><path d="M0 3.0H9M3.0 0V9"/><path d="M0 5.5H9M5.5 0V9"/><path d="M0 8.0H9M8.0 0V9"/></g></svg>
<div class="t" style="left:52px;top:406px;font-size:9px;line-height:11px;color:#c8c8c8;">创建</div>
<div class="t" style="left:80px;top:406px;font-size:9px;line-height:11px;color:#c8c8c8;">编辑</div>
<div class="t" style="left:107px;top:406px;font-size:9px;line-height:11px;color:#c8c8c8;">功能</div>
<div class="t" style="left:136px;top:406px;font-size:9px;line-height:11px;color:#c8c8c8;">纹理</div>
<div class="a" style="left:421px;top:402px;width:3px;height:94px;background:#474747;"></div>
<div class="a" style="left:422px;top:402px;width:1px;height:94px;background:#393939;"></div>
<div class="a" style="left:424px;top:402px;width:236px;height:94px;background:#474747;"></div>
<div class="a" style="left:424px;top:402px;width:1px;height:94px;background:#565656;"></div>
<div class="a" style="left:424px;top:402px;width:236px;height:18px;background:#4a4a4a;"></div>
<div class="a" style="left:424px;top:420px;width:236px;height:1px;background:#363636;"></div>
<svg class="a" style="left:430px;top:407px" width="9" height="9"><g stroke="#7c7c7c" stroke-width="0.9" fill="none"><path d="M0 0.5H9M0.5 0V9"/><path d="M0 3.0H9M3.0 0V9"/><path d="M0 5.5H9M5.5 0V9"/><path d="M0 8.0H9M8.0 0V9"/></g></svg>
<div class="t" style="left:443px;top:406px;font-size:9px;line-height:11px;color:#c8c8c8;">位置</div>
<div class="t" style="left:516px;top:406px;font-size:9px;line-height:11px;color:#c8c8c8;">尺寸</div>
<div class="t" style="left:588px;top:406px;font-size:9px;line-height:11px;color:#c8c8c8;">旋转</div>
<div class="t" style="left:428px;top:426px;font-size:9px;line-height:11px;color:#9a9a9a;">X</div>
<div class="a" style="left:436px;top:424px;width:65px;height:14px;background:#363636;border-radius:2px"></div>
<div class="t" style="left:440px;top:426px;font-size:9px;line-height:11px;color:#cfcfcf;">0 cm</div>
<svg class="a" style="left:495px;top:427px;" width="4" height="8" viewBox="0 0 4 8"><path d="M2 0L4 3H0Z M2 8L4 5H0Z" fill="#8a8a8a"/></svg>
<div class="t" style="left:505px;top:426px;font-size:9px;line-height:11px;color:#9a9a9a;">X</div>
<div class="a" style="left:513px;top:424px;width:65px;height:14px;background:#363636;border-radius:2px"></div>
<div class="t" style="left:517px;top:426px;font-size:9px;line-height:11px;color:#cfcfcf;">0 cm</div>
<svg class="a" style="left:572px;top:427px;" width="4" height="8" viewBox="0 0 4 8"><path d="M2 0L4 3H0Z M2 8L4 5H0Z" fill="#8a8a8a"/></svg>
<div class="t" style="left:582px;top:426px;font-size:9px;line-height:11px;color:#9a9a9a;">H</div>
<div class="a" style="left:592px;top:424px;width:63px;height:14px;background:#363636;border-radius:2px"></div>
<div class="t" style="left:596px;top:426px;font-size:9px;line-height:11px;color:#cfcfcf;">0 °</div>
<svg class="a" style="left:649px;top:427px;" width="4" height="8" viewBox="0 0 4 8"><path d="M2 0L4 3H0Z M2 8L4 5H0Z" fill="#8a8a8a"/></svg>
<div class="t" style="left:428px;top:444px;font-size:9px;line-height:11px;color:#9a9a9a;">Y</div>
<div class="a" style="left:436px;top:442px;width:65px;height:14px;background:#363636;border-radius:2px"></div>
<div class="t" style="left:440px;top:444px;font-size:9px;line-height:11px;color:#cfcfcf;">0 cm</div>
<svg class="a" style="left:495px;top:445px;" width="4" height="8" viewBox="0 0 4 8"><path d="M2 0L4 3H0Z M2 8L4 5H0Z" fill="#8a8a8a"/></svg>
<div class="t" style="left:505px;top:444px;font-size:9px;line-height:11px;color:#9a9a9a;">Y</div>
<div class="a" style="left:513px;top:442px;width:65px;height:14px;background:#363636;border-radius:2px"></div>
<div class="t" style="left:517px;top:444px;font-size:9px;line-height:11px;color:#cfcfcf;">0 cm</div>
<svg class="a" style="left:572px;top:445px;" width="4" height="8" viewBox="0 0 4 8"><path d="M2 0L4 3H0Z M2 8L4 5H0Z" fill="#8a8a8a"/></svg>
<div class="t" style="left:582px;top:444px;font-size:9px;line-height:11px;color:#9a9a9a;">P</div>
<div class="a" style="left:592px;top:442px;width:63px;height:14px;background:#363636;border-radius:2px"></div>
<div class="t" style="left:596px;top:444px;font-size:9px;line-height:11px;color:#cfcfcf;">0 °</div>
<svg class="a" style="left:649px;top:445px;" width="4" height="8" viewBox="0 0 4 8"><path d="M2 0L4 3H0Z M2 8L4 5H0Z" fill="#8a8a8a"/></svg>
<div class="t" style="left:428px;top:461px;font-size:9px;line-height:11px;color:#9a9a9a;">Z</div>
<div class="a" style="left:436px;top:459px;width:65px;height:14px;background:#363636;border-radius:2px"></div>
<div class="t" style="left:440px;top:461px;font-size:9px;line-height:11px;color:#cfcfcf;">0 cm</div>
<svg class="a" style="left:495px;top:462px;" width="4" height="8" viewBox="0 0 4 8"><path d="M2 0L4 3H0Z M2 8L4 5H0Z" fill="#8a8a8a"/></svg>
<div class="t" style="left:505px;top:461px;font-size:9px;line-height:11px;color:#9a9a9a;">Z</div>
<div class="a" style="left:513px;top:459px;width:65px;height:14px;background:#363636;border-radius:2px"></div>
<div class="t" style="left:517px;top:461px;font-size:9px;line-height:11px;color:#cfcfcf;">0 cm</div>
<svg class="a" style="left:572px;top:462px;" width="4" height="8" viewBox="0 0 4 8"><path d="M2 0L4 3H0Z M2 8L4 5H0Z" fill="#8a8a8a"/></svg>
<div class="t" style="left:582px;top:461px;font-size:9px;line-height:11px;color:#9a9a9a;">B</div>
<div class="a" style="left:592px;top:459px;width:63px;height:14px;background:#363636;border-radius:2px"></div>
<div class="t" style="left:596px;top:461px;font-size:9px;line-height:11px;color:#cfcfcf;">0 °</div>
<svg class="a" style="left:649px;top:462px;" width="4" height="8" viewBox="0 0 4 8"><path d="M2 0L4 3H0Z M2 8L4 5H0Z" fill="#8a8a8a"/></svg>
<div class="a" style="left:437px;top:480px;width:64px;height:13px;background:linear-gradient(#6a6a6a,#5a5a5a);border-radius:2px"></div>
<div class="t" style="left:441px;top:481px;font-size:9px;line-height:11px;color:#d8d8d8;">对象 (相对)</div>
<svg class="a" style="left:491px;top:484px;" width="7" height="5" viewBox="0 0 7 5"><path d="M0 0H6L3 4Z" fill="#ddd"/></svg>
<div class="a" style="left:513px;top:480px;width:65px;height:13px;background:#4e4e4e;border-radius:2px"></div>
<div class="t" style="left:519px;top:481px;font-size:9px;line-height:11px;color:#666;">绝对尺寸</div>
<svg class="a" style="left:568px;top:484px;" width="7" height="5" viewBox="0 0 7 5"><path d="M0 0H6L3 4Z" fill="#666"/></svg>
<div class="a" style="left:592px;top:480px;width:63px;height:13px;background:linear-gradient(#5e5e5e,#525252);border-radius:6px"></div>
<div class="t" style="left:615px;top:481px;font-size:9px;line-height:11px;color:#d0d0d0;">应用</div>
<div class="a" style="left:0px;top:496px;width:660px;height:17px;background:#474747;"></div>
<div class="a" style="left:0px;top:496px;width:660px;height:1px;background:#4a4a4a;"></div>
<svg class="a" style="left:3px;top:499px" width="9" height="11"><g fill="#6a6a6a"><rect x="0" y="0" width="1" height="1"/><rect x="0" y="2" width="1" height="1"/><rect x="0" y="4" width="1" height="1"/><rect x="0" y="6" width="1" height="1"/><rect x="0" y="8" width="1" height="1"/><rect x="0" y="10" width="1" height="1"/><rect x="2" y="0" width="1" height="1"/><rect x="2" y="2" width="1" height="1"/><rect x="2" y="4" width="1" height="1"/><rect x="2" y="6" width="1" height="1"/><rect x="2" y="8" width="1" height="1"/><rect x="2" y="10" width="1" height="1"/><rect x="4" y="0" width="1" height="1"/><rect x="4" y="2" width="1" height="1"/><rect x="4" y="4" width="1" height="1"/><rect x="4" y="6" width="1" height="1"/><rect x="4" y="8" width="1" height="1"/><rect x="4" y="10" width="1" height="1"/><rect x="6" y="0" width="1" height="1"/><rect x="6" y="2" width="1" height="1"/><rect x="6" y="4" width="1" height="1"/><rect x="6" y="6" width="1" height="1"/><rect x="6" y="8" width="1" height="1"/><rect x="6" y="10" width="1" height="1"/><rect x="8" y="0" width="1" height="1"/><rect x="8" y="2" width="1" height="1"/><rect x="8" y="4" width="1" height="1"/><rect x="8" y="6" width="1" height="1"/><rect x="8" y="8" width="1" height="1"/><rect x="8" y="10" width="1" height="1"/></g></svg>
<div class="t" style="left:18px;top:501px;font-size:9px;line-height:11px;color:#c8c8c8;transform:scaleX(0.95);transform-origin:0 0">实时选择 : 点击并拖动鼠标选择元素。按住 SHIFT 键增加选择对象；按住 CTRL 键减少选择对象。</div>
<div class="a" style="left:660px;top:20px;width:2px;height:493px;background:#3c3c3c;"></div>
<div class="a" style="left:662px;top:20px;width:318px;height:242px;background:#474747;"></div>
<div class="a" style="left:662px;top:22px;width:316px;height:18px;background:#4b4b4b;"></div>
<div class="a" style="left:662px;top:22px;width:316px;height:1px;background:#5c5c5c;"></div>
<div class="a" style="left:662px;top:40px;width:316px;height:1px;background:#383838;"></div>
<div class="a" style="left:662px;top:41px;width:316px;height:1px;background:#555;"></div>
<svg class="a" style="left:667px;top:27px" width="9" height="9"><g stroke="#7c7c7c" stroke-width="0.9" fill="none"><path d="M0 0.5H9M0.5 0V9"/><path d="M0 3.0H9M3.0 0V9"/><path d="M0 5.5H9M5.5 0V9"/><path d="M0 8.0H9M8.0 0V9"/></g></svg>
<div class="t" style="left:682px;top:26px;font-size:9px;line-height:11px;color:#c8c8c8;">文件</div>
<div class="t" style="left:711px;top:26px;font-size:9px;line-height:11px;color:#c8c8c8;">编辑</div>
<div class="t" style="left:739px;top:26px;font-size:9px;line-height:11px;color:#c8c8c8;">查看</div>
<div class="t" style="left:767px;top:26px;font-size:9px;line-height:11px;color:#c8c8c8;">对象</div>
<div class="t" style="left:795px;top:26px;font-size:9px;line-height:11px;color:#c8c8c8;">标签</div>
<div class="t" style="left:823px;top:26px;font-size:9px;line-height:11px;color:#c8c8c8;">书签</div>
<svg class="a" style="left:922px;top:23px;" width="58" height="16" viewBox="0 0 58 16"><circle cx="7" cy="6" r="3.5" fill="none" stroke="#222" stroke-width="1.4"/><path d="M9.5 8.5L13 13" stroke="#222" stroke-width="2"/><path d="M22 2L28 8H26V13H18V8H16Z" fill="none" stroke="#111" stroke-width="1.6"/><path d="M34 8H43" stroke="#6a6a6a" stroke-width="1.5"/><rect x="47" y="3" width="9" height="11" fill="none" stroke="#222" stroke-width="1.2"/><path d="M47 3.5H56M51.5 6V12M48.5 9H54.5" stroke="#222" stroke-width="1.2"/></svg>
<div class="a" style="left:662px;top:41px;width:316px;height:17px;background:#4d4d4d;"></div>
<div class="a" style="left:662px;top:58px;width:316px;height:16px;background:#464646;"></div>
<div class="a" style="left:662px;top:74px;width:316px;height:16px;background:#4d4d4d;"></div>
<div class="a" style="left:662px;top:90px;width:316px;height:16px;background:#474747;"></div>
<div class="a" style="left:729px;top:41px;width:1px;height:221px;background:#3b3b3b;"></div>
<div class="a" style="left:760px;top:41px;width:1px;height:221px;background:#3b3b3b;"></div>
<div class="a" style="left:668px;top:47px;width:1px;height:48px;background:#8a8a8a;"></div>
<div class="a" style="left:675px;top:63px;width:1px;height:7px;background:#9a9a9a;"></div>
<div class="a" style="left:675px;top:69px;width:6px;height:1px;background:#9a9a9a;"></div>
<div class="a" style="left:675px;top:95px;width:1px;height:7px;background:#9a9a9a;"></div>
<div class="a" style="left:675px;top:101px;width:6px;height:1px;background:#9a9a9a;"></div>
<svg class="a" style="left:664px;top:46px;" width="9" height="9" viewBox="0 0 9 9"><rect x="0.5" y="0.5" width="8" height="8" fill="#4a4a4a" stroke="#9a9a9a" stroke-width="1"/><path d="M2 4.5H7" stroke="#bbb" stroke-width="1"/></svg>
<svg class="a" style="left:664px;top:78px;" width="9" height="9" viewBox="0 0 9 9"><rect x="0.5" y="0.5" width="8" height="8" fill="#4a4a4a" stroke="#9a9a9a" stroke-width="1"/><path d="M2 4.5H7" stroke="#bbb" stroke-width="1"/></svg>
<svg class="a" style="left:677px;top:44px;" width="10" height="12" viewBox="0 0 10 12"><ellipse cx="5" cy="6" rx="4" ry="5" fill="#dde8dd"/><path d="M5 1A4 5 0 0 0 5 11Z" fill="#3ec070"/></svg>
<div class="t" style="left:690px;top:45px;font-size:9px;line-height:11px;color:#bdbdbd;">对称</div>
<svg class="a" style="left:685px;top:60px;" width="13" height="12" viewBox="0 0 13 12"><path d="M6.5 1L12 11H1Z" fill="#5ab0f0" stroke="#2a6aa0" stroke-width="0.6"/><circle cx="6.5" cy="1.5" r="1.3" fill="#fff"/><circle cx="1.5" cy="10.5" r="1.3" fill="#fff"/><circle cx="11.5" cy="10.5" r="1.3" fill="#fff"/></svg>
<div class="t" style="left:699px;top:61px;font-size:9px;line-height:11px;color:#d0d0d0;">立方体</div>
<svg class="a" style="left:677px;top:75px;" width="11" height="12" viewBox="0 0 11 12"><path d="M2 2V10H9" fill="none" stroke="#ddd" stroke-width="1.2"/><text x="5" y="7" font-family="Liberation Sans" font-size="7" fill="#ddd">0</text></svg>
<div class="t" style="left:690px;top:77px;font-size:9px;line-height:11px;color:#d89a30;">对称</div>
<svg class="a" style="left:685px;top:92px;" width="13" height="12" viewBox="0 0 13 12"><path d="M6.5 1L12 11H1Z" fill="#5ab0f0" stroke="#2a6aa0" stroke-width="0.6"/><circle cx="6.5" cy="1.5" r="1.3" fill="#fff"/><circle cx="1.5" cy="10.5" r="1.3" fill="#fff"/><circle cx="11.5" cy="10.5" r="1.3" fill="#fff"/></svg>
<div class="t" style="left:699px;top:93px;font-size:9px;line-height:11px;color:#e0a830;">立方体</div>
<svg class="a" style="left:733px;top:46px;" width="10" height="10" viewBox="0 0 10 10"><rect x="0" y="0" width="10" height="10" fill="#6a6a6a"/><path d="M1 9L9 1" stroke="#888" stroke-width="1.5"/></svg>
<svg class="a" style="left:745px;top:45px;" width="6" height="12" viewBox="0 0 6 12"><circle cx="3" cy="3" r="2.2" fill="#d05060"/><circle cx="3" cy="9" r="2.2" fill="#d05060"/></svg>
<svg class="a" style="left:751px;top:45px;" width="9" height="10" viewBox="0 0 9 10"><path d="M1 5L3.5 8L8 1" fill="none" stroke="#3ec070" stroke-width="1.6"/></svg>
<svg class="a" style="left:733px;top:61px;" width="10" height="10" viewBox="0 0 10 10"><rect x="0" y="0" width="10" height="10" fill="#6a6a6a"/><path d="M1 9L9 1" stroke="#888" stroke-width="1.5"/></svg>
<svg class="a" style="left:745px;top:60px;" width="6" height="12" viewBox="0 0 6 12"><circle cx="3" cy="3" r="2.2" fill="#d05060"/><circle cx="3" cy="9" r="2.2" fill="#d05060"/></svg>
<svg class="a" style="left:733px;top:77px;" width="10" height="10" viewBox="0 0 10 10"><rect x="0" y="0" width="10" height="10" fill="#6a6a6a"/><path d="M1 9L9 1" stroke="#888" stroke-width="1.5"/></svg>
<svg class="a" style="left:745px;top:76px;" width="6" height="12" viewBox="0 0 6 12"><circle cx="3" cy="3" r="2.2" fill="#6a6a6a"/><circle cx="3" cy="9" r="2.2" fill="#6a6a6a"/></svg>
<svg class="a" style="left:733px;top:93px;" width="10" height="10" viewBox="0 0 10 10"><rect x="0" y="0" width="10" height="10" fill="#6a6a6a"/><path d="M1 9L9 1" stroke="#888" stroke-width="1.5"/></svg>
<svg class="a" style="left:745px;top:92px;" width="6" height="12" viewBox="0 0 6 12"><circle cx="3" cy="3" r="2.2" fill="#6a6a6a"/><circle cx="3" cy="9" r="2.2" fill="#6a6a6a"/></svg>
<svg class="a" style="left:763px;top:59px;" width="12" height="13" viewBox="0 0 12 13"><circle cx="3" cy="3" r="2.5" fill="#d08a30"/><circle cx="8.5" cy="9" r="2.5" fill="#c07a20"/></svg>
<svg class="a" style="left:778px;top:60px;" width="11" height="11" viewBox="0 0 11 11"><rect x="0" y="0" width="11" height="11" fill="#f4f4f4"/><path d="M0 0h2.75v2.75H0zM5.5 0h2.75v2.75H5.5zM2.75 2.75h2.75v2.75H2.75zM8.25 2.75H11v2.75H8.25zM0 5.5h2.75v2.75H0zM5.5 5.5h2.75v2.75H5.5zM2.75 8.25h2.75V11H2.75zM8.25 8.25H11V11H8.25z" fill="#111"/></svg>
<svg class="a" style="left:763px;top:91px;" width="12" height="13" viewBox="0 0 12 13"><circle cx="3" cy="3" r="2.5" fill="#d08a30"/><circle cx="8.5" cy="9" r="2.5" fill="#c07a20"/></svg>
<svg class="a" style="left:778px;top:92px;" width="11" height="11" viewBox="0 0 11 11"><rect x="0" y="0" width="11" height="11" fill="#f4f4f4"/><path d="M0 0h2.75v2.75H0zM5.5 0h2.75v2.75H5.5zM2.75 2.75h2.75v2.75H2.75zM8.25 2.75H11v2.75H8.25zM0 5.5h2.75v2.75H0zM5.5 5.5h2.75v2.75H5.5zM2.75 8.25h2.75V11H2.75zM8.25 8.25H11V11H8.25z" fill="#111"/></svg>
<div class="a" style="left:662px;top:259px;width:318px;height:4px;background:#363636;"></div>
<div class="a" style="left:662px;top:263px;width:318px;height:250px;background:#474747;"></div>
<div class="a" style="left:662px;top:263px;width:316px;height:17px;background:#4b4b4b;"></div>
<div class="a" style="left:662px;top:280px;width:316px;height:1px;background:#383838;"></div>
<svg class="a" style="left:667px;top:267px" width="9" height="9"><g stroke="#7c7c7c" stroke-width="0.9" fill="none"><path d="M0 0.5H9M0.5 0V9"/><path d="M0 3.0H9M3.0 0V9"/><path d="M0 5.5H9M5.5 0V9"/><path d="M0 8.0H9M8.0 0V9"/></g></svg>
<div class="t" style="left:683px;top:266px;font-size:9px;line-height:11px;color:#c8c8c8;">模式</div>
<div class="t" style="left:711px;top:266px;font-size:9px;line-height:11px;color:#c8c8c8;">编辑</div>
<div class="t" style="left:738px;top:266px;font-size:9px;line-height:11px;color:#c8c8c8;">用户数据</div>
<svg class="a" style="left:865px;top:264px;" width="113" height="16" viewBox="0 0 113 16"><path d="M3 8L15 3L12 8L15 13Z" fill="#111"/><path d="M16 11L28 5" stroke="#5a5a5a" stroke-width="1.5"/><path d="M44 2L49 14L44 11L39 14Z" fill="#111"/><circle cx="64" cy="6" r="3.3" fill="none" stroke="#222" stroke-width="1.3"/><path d="M66 8.5L69.5 12.5" stroke="#222" stroke-width="1.8"/><rect x="75" y="7" width="9" height="8" rx="1" fill="none" stroke="#222" stroke-width="1.2"/><path d="M77 7V4.5A2.5 2.5 0 0 1 82 4.5" fill="none" stroke="#222" stroke-width="1.2"/><circle cx="93" cy="8" r="5" fill="none" stroke="#222" stroke-width="1.2"/><path d="M90.5 7H95.5M90.5 9H95.5" stroke="#222" stroke-width="1"/><rect x="102" y="2" width="9" height="12" fill="none" stroke="#222" stroke-width="1.2"/><path d="M102 2.5H111M106.5 5V11M103.5 8H109.5" stroke="#222" stroke-width="1.2"/></svg>
<svg class="a" style="left:666px;top:285px;" width="14" height="14" viewBox="0 0 14 14"><path d="M7 2L12.5 12H1.5Z" fill="#5ab0f0" stroke="#2a6aa0" stroke-width="0.6"/><circle cx="7" cy="2" r="1.5" fill="#fff"/><circle cx="1.8" cy="11.8" r="1.5" fill="#fff"/><circle cx="12.2" cy="11.8" r="1.5" fill="#fff"/></svg>
<div class="t" style="left:684px;top:287px;font-size:9px;line-height:11px;color:#c8c8c8;">多边形对象 [立方体]</div>
<div class="a" style="left:665px;top:303px;width:73px;height:15px;background:#9cbce8;"></div>
<div class="t" style="left:691px;top:305px;font-size:9px;line-height:11px;color:#1a1a1a;">基本</div>
<div class="a" style="left:739px;top:303px;width:73px;height:15px;background:#6a6a6a;"></div>
<div class="t" style="left:766px;top:305px;font-size:9px;line-height:11px;color:#d0d0d0;">坐标</div>
<div class="a" style="left:813px;top:303px;width:73px;height:15px;background:#6a6a6a;"></div>
<div class="t" style="left:815px;top:305px;font-size:9px;line-height:11px;color:#d8d8d8;">平滑着色(Phong)</div>
<div class="a" style="left:664px;top:321px;width:312px;height:15px;background:#353535;"></div>
<div class="t" style="left:666px;top:323px;font-size:9px;line-height:11px;color:#c8c8c8;">基本属性</div>
<div class="a" style="left:662px;top:336px;width:2px;height:177px;background:#383838;"></div>
<div class="t" style="left:680px;top:343px;font-size:9px;line-height:11px;color:#a8a8a8;">名称</div>
<div class="t" style="left:700px;top:343px;font-size:8px;line-height:10px;color:#8a8a8a;">. . . . .</div>
<div class="a" style="left:728px;top:341px;width:247px;height:14px;background:#323232;"></div>
<div class="t" style="left:733px;top:343px;font-size:9px;line-height:11px;color:#d0d0d0;">立方体</div>
<div class="t" style="left:680px;top:361px;font-size:9px;line-height:11px;color:#a8a8a8;">图层</div>
<div class="t" style="left:700px;top:361px;font-size:8px;line-height:10px;color:#8a8a8a;">. . . . .</div>
<div class="a" style="left:728px;top:359px;width:227px;height:14px;background:#323232;"></div>
<div class="a" style="left:955px;top:359px;width:6px;height:14px;background:#6a6a6a;"></div>
<svg class="a" style="left:963px;top:360px;" width="13" height="13" viewBox="0 0 13 13"><circle cx="6.5" cy="6.5" r="6" fill="#e8e8e8"/><path d="M4 3L10 8L7 8.5L8.5 11L7 11.7L5.5 9L3.5 10.5Z" fill="#111"/></svg>
<svg class="a" style="left:664px;top:378px;" width="12" height="12" viewBox="0 0 12 12"><circle cx="6" cy="6" r="5" fill="none" stroke="#777" stroke-width="1"/><circle cx="6" cy="6" r="2" fill="#8a8a8a"/></svg>
<div class="t" style="left:680px;top:379px;font-size:9px;line-height:11px;color:#b0b0b0;">编辑器可见</div>
<div class="a" style="left:728px;top:377px;width:247px;height:14px;background:linear-gradient(#626262,#555);"></div>
<div class="t" style="left:733px;top:379px;font-size:9px;line-height:11px;color:#d0d0d0;">默认</div>
<svg class="a" style="left:965px;top:382px;" width="7" height="5" viewBox="0 0 7 5"><path d="M0 0H6L3 4Z" fill="#ddd"/></svg>
<svg class="a" style="left:664px;top:394px;" width="12" height="12" viewBox="0 0 12 12"><circle cx="6" cy="6" r="5" fill="none" stroke="#777" stroke-width="1"/><circle cx="6" cy="6" r="2" fill="#8a8a8a"/></svg>
<div class="t" style="left:680px;top:395px;font-size:9px;line-height:11px;color:#b0b0b0;">渲染器可见</div>
<div class="a" style="left:728px;top:393px;width:247px;height:14px;background:linear-gradient(#626262,#555);"></div>
<div class="t" style="left:733px;top:395px;font-size:9px;line-height:11px;color:#d0d0d0;">默认</div>
<svg class="a" style="left:965px;top:398px;" width="7" height="5" viewBox="0 0 7 5"><path d="M0 0H6L3 4Z" fill="#ddd"/></svg>
<svg class="a" style="left:664px;top:410px;" width="12" height="12" viewBox="0 0 12 12"><circle cx="6" cy="6" r="5" fill="none" stroke="#777" stroke-width="1"/><circle cx="6" cy="6" r="2" fill="#8a8a8a"/></svg>
<div class="t" style="left:680px;top:411px;font-size:9px;line-height:11px;color:#b0b0b0;">使用颜色</div>
<div class="t" style="left:717px;top:411px;font-size:8px;line-height:10px;color:#888;">.</div>
<div class="a" style="left:728px;top:409px;width:247px;height:14px;background:linear-gradient(#626262,#555);"></div>
<div class="t" style="left:733px;top:411px;font-size:9px;line-height:11px;color:#d0d0d0;">关闭</div>
<svg class="a" style="left:965px;top:414px;" width="7" height="5" viewBox="0 0 7 5"><path d="M0 0H6L3 4Z" fill="#ddd"/></svg>
<svg class="a" style="left:664px;top:427px;" width="12" height="12" viewBox="0 0 12 12"><path d="M6 1A5 5 0 0 0 6 11Z" fill="#555"/></svg>
<div class="t" style="left:680px;top:427px;font-size:9px;line-height:11px;color:#6e6e6e;">显示颜色</div>
<svg class="a" style="left:719px;top:429px;" width="5" height="7" viewBox="0 0 5 7"><path d="M0 0L4 3.5L0 7Z" fill="#111"/></svg>
<div class="a" style="left:728px;top:425px;width:23px;height:14px;background:#3a3a3a;border:1px solid #4a4a4a"></div>
<svg class="a" style="left:664px;top:442px;" width="12" height="12" viewBox="0 0 12 12"><circle cx="6" cy="6" r="5" fill="none" stroke="#777" stroke-width="1"/><circle cx="6" cy="6" r="2" fill="#8a8a8a"/></svg>
<div class="t" style="left:680px;top:443px;font-size:9px;line-height:11px;color:#b0b0b0;">透显</div>
<div class="t" style="left:700px;top:443px;font-size:8px;line-height:10px;color:#8a8a8a;">. . . . .</div>
<div class="a" style="left:729px;top:444px;width:8px;height:8px;background:#5a5a5a;border-radius:1px"></div>
<div class="a" style="left:978px;top:20px;width:22px;height:493px;background:#474747;"></div>
<div class="a" style="left:979px;top:20px;width:2px;height:493px;background:#3c3c3c;"></div>
<div class="a" style="left:979px;top:22px;width:1px;height:237px;background:#5a5a5a;"></div>
<div class="a" style="left:982px;top:22px;width:18px;height:28px;background:#7e858e;"></div>
<div class="t" style="left:951px;top:31.0px;width:80px;text-align:center;font-size:8.5px;line-height:10px;color:#f0a020;transform:rotate(90deg)">对象</div>
<div class="a" style="left:982px;top:51.5px;width:18px;height:22.0px;background:#3e3e3e;"></div>
<div class="t" style="left:951px;top:57.5px;width:80px;text-align:center;font-size:8.5px;line-height:10px;color:#a0a0a0;transform:rotate(90deg)">场次</div>
<div class="a" style="left:982px;top:76px;width:18px;height:51.5px;background:#3e3e3e;"></div>
<div class="t" style="left:951px;top:96.8px;width:80px;text-align:center;font-size:8.5px;line-height:10px;color:#a0a0a0;transform:rotate(90deg)">内容浏览器</div>
<div class="a" style="left:982px;top:130.5px;width:18px;height:22.0px;background:#3e3e3e;"></div>
<div class="t" style="left:951px;top:136.5px;width:80px;text-align:center;font-size:8.5px;line-height:10px;color:#a0a0a0;transform:rotate(90deg)">构造</div>
<div class="a" style="left:982px;top:261px;width:18px;height:28px;background:#7e858e;"></div>
<div class="t" style="left:951px;top:270.0px;width:80px;text-align:center;font-size:8.5px;line-height:10px;color:#f0a020;transform:rotate(90deg)">属性</div>
<div class="a" style="left:982px;top:291px;width:18px;height:19px;background:#3e3e3e;"></div>
<div class="t" style="left:951px;top:295.5px;width:80px;text-align:center;font-size:8.5px;line-height:10px;color:#a0a0a0;transform:rotate(90deg)">层</div>
<svg class="a" style="left:600px;top:30px;" width="210" height="80" viewBox="0 0 210 80"><rect x="58" y="5" width="144" height="39" fill="none" stroke="#e8262a" stroke-width="2"/><path d="M8.5 73L50 46" stroke="#ee2a2a" stroke-width="2.4"/><path d="M57.5 41.5L45.5 43L52 52Z" fill="#ee2a2a"/></svg>
<div class="t" style="left:451px;top:116px;font-family:'Liberation Serif',serif;font-weight:bold;font-size:18.9px;line-height:22px;color:#7e0c14;text-shadow:1px 1px 0 #1a0a0a,0 0 1px #2a0a0a">此组作为备分隐藏好，如果建模过程有错可以重新调用</div>
<svg class="a" style="left:838px;top:405px;" width="40" height="12" viewBox="0 0 40 12"><ellipse cx="9" cy="8" rx="6" ry="7" fill="#d8dce8"/><ellipse cx="27" cy="8" rx="6" ry="7" fill="#d8dce8"/></svg>
<div class="a" style="left:765px;top:414px;width:180px;height:85px;background:#1f2b5a;"></div>
<svg class="a" style="left:778px;top:439px;" width="38" height="38" viewBox="0 0 38 38"><path d="M6 4Q6 1 9 2.5L33 16Q36 18 33 20L12 32" fill="none" stroke="#d8dce8" stroke-width="3.2" stroke-linecap="round"/><path d="M6 4V30Q6 35 11 33" fill="none" stroke="#d8dce8" stroke-width="3.2" stroke-linecap="round"/><path d="M10 8V28" stroke="#d8dce8" stroke-width="0"/><path d="M15 14L23 18.5L15 23Z" fill="#d8dce8"/><path d="M25 14V23" stroke="#d8dce8" stroke-width="2"/></svg>
<div class="t" style="left:826px;top:437px;font-size:24px;line-height:26px;font-weight:bold;color:#d8dce8;letter-spacing:3px">溜溜自学</div>
<div class="t" style="left:826px;top:466px;font-size:9.5px;line-height:10px;color:#d8dce8;letter-spacing:2.0px">ZIXUE.3D66.COM</div>
</body></html>
